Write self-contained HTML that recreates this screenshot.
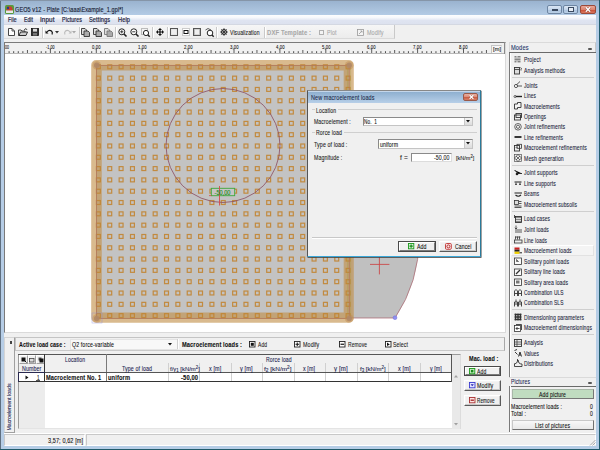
<!DOCTYPE html>
<html><head><meta charset="utf-8">
<style>
*{margin:0;padding:0;box-sizing:border-box}
html,body{width:600px;height:450px;overflow:hidden;background:#b9d1ea}
body{position:relative;font-family:"Liberation Sans",sans-serif;font-size:7px;color:#000}
.a{position:absolute}
.t{position:absolute;white-space:pre;line-height:1;transform-origin:left center;-webkit-text-stroke:0.09px currentColor}
svg{position:absolute;overflow:visible}
</style></head><body>
<div class="a" style="left:0px;top:0px;width:600px;height:450px;background:#bad1ea"></div>
<div class="a" style="left:0px;top:0px;width:1px;height:450px;background:#5f6f80"></div>
<div class="a" style="left:0px;top:0px;width:600px;height:1px;background:#8595a8"></div>
<div class="a" style="left:599px;top:0px;width:1px;height:450px;background:#1f5a6a"></div>
<div class="a" style="left:0px;top:449px;width:600px;height:1px;background:#1f5a6a"></div>
<div class="a" style="left:1px;top:1px;width:598px;height:14px;background:linear-gradient(#9ab3cf,#b3cbe5)"></div>
<div class="a" style="left:1px;top:15px;width:3px;height:434px;background:#b6cde6"></div>
<div class="a" style="left:596px;top:15px;width:3px;height:434px;background:#b6cde6"></div>
<div class="a" style="left:1px;top:446px;width:598px;height:3px;background:#b6cde6"></div>
<svg style="left:5px;top:5px" width="9" height="9" viewBox="0 0 9 9"><rect x="0" y="0" width="9" height="9" rx="1.5" fill="#5a9a3c"/><circle cx="4.5" cy="4.3" r="3" fill="#c84030"/><rect x="1" y="5.5" width="7" height="2.5" fill="#e8e8e8"/><circle cx="3" cy="3" r="1.2" fill="#2a3a8a"/></svg>
<div class="t" style="left:15.00px;top:6.80px;font-size:6.8px;letter-spacing:0.12px;color:#1a2236;transform:scaleX(0.811);-webkit-text-stroke:0.15px #1a2236">GEO5 v12 - Plate [C:\aaa\Example_1.gpl*]</div>
<div class="a" style="left:547px;top:5px;width:15px;height:9px;border:1px solid #6e86a3;border-radius:2px;background:linear-gradient(#dbe7f4 0,#c3d5ea 50%,#a9c1dd 51%,#b9cfe6 100%)"></div>
<div class="a" style="left:551.5px;top:8.8px;width:6px;height:2.2px;background:#e8eef6;border:0.6px solid #3a4a60"></div>
<div class="a" style="left:563px;top:5px;width:15px;height:9px;border:1px solid #6e86a3;border-radius:2px;background:linear-gradient(#dbe7f4 0,#c3d5ea 50%,#a9c1dd 51%,#b9cfe6 100%)"></div>
<div class="a" style="left:567.5px;top:7px;width:6.5px;height:5px;border:0.8px solid #3a4a60;border-top-width:1.6px;background:#e8eef6"></div>
<div class="a" style="left:580px;top:5px;width:16px;height:9px;border:1px solid #9a4a3a;border-radius:2px;background:linear-gradient(#eaa898 0,#dc8470 50%,#c84a30 51%,#d87860 100%)"></div>
<svg style="left:584px;top:6px" width="8" height="7" viewBox="0 0 8 7"><path d="M1.8 1.2 L6.2 5.8 M6.2 1.2 L1.8 5.8" stroke="#5a2a20" stroke-width="2.2" opacity="0.5"/><path d="M1.8 1.2 L6.2 5.8 M6.2 1.2 L1.8 5.8" stroke="#fff" stroke-width="1.3"/></svg>
<div class="a" style="left:4px;top:15px;width:592px;height:10px;background:linear-gradient(#fcfdfe 0,#f6f8fc 25%,#dfe4f1 55%,#dce1ee 100%)"></div>
<div class="a" style="left:4px;top:24px;width:592px;height:1px;background:#d4d8e2"></div>
<div class="t" style="left:8.00px;top:16.70px;font-size:6.8px;letter-spacing:0.12px;color:#1e2440;transform:scaleX(0.751);-webkit-text-stroke:0.2px #1e2440">File</div>
<div class="t" style="left:24.00px;top:16.70px;font-size:6.8px;letter-spacing:0.12px;color:#1e2440;transform:scaleX(0.745);-webkit-text-stroke:0.2px #1e2440">Edit</div>
<div class="t" style="left:40.00px;top:16.70px;font-size:6.8px;letter-spacing:0.12px;color:#1e2440;transform:scaleX(0.929);-webkit-text-stroke:0.2px #1e2440">Input</div>
<div class="t" style="left:62.00px;top:16.70px;font-size:6.8px;letter-spacing:0.12px;color:#1e2440;transform:scaleX(0.787);-webkit-text-stroke:0.2px #1e2440">Pictures</div>
<div class="t" style="left:89.00px;top:16.70px;font-size:6.8px;letter-spacing:0.12px;color:#1e2440;transform:scaleX(0.826);-webkit-text-stroke:0.2px #1e2440">Settings</div>
<div class="t" style="left:118.00px;top:16.70px;font-size:6.8px;letter-spacing:0.12px;color:#1e2440;transform:scaleX(0.837);-webkit-text-stroke:0.2px #1e2440">Help</div>
<div class="a" style="left:4px;top:25px;width:592px;height:421px;background:#f0f0f0"></div>
<div class="a" style="left:4px;top:25px;width:391px;height:14px;background:linear-gradient(#f6f6f6,#ececec);border-bottom:1px solid #dadada;border-right:1px solid #c9c9c9"></div>
<div class="a" style="left:42px;top:27px;width:1px;height:11px;background:#c9c9c9;box-shadow:1px 0 #fff"></div>
<div class="a" style="left:78.5px;top:27px;width:1px;height:11px;background:#c9c9c9;box-shadow:1px 0 #fff"></div>
<div class="a" style="left:115px;top:27px;width:1px;height:11px;background:#c9c9c9;box-shadow:1px 0 #fff"></div>
<div class="a" style="left:152px;top:27px;width:1px;height:11px;background:#c9c9c9;box-shadow:1px 0 #fff"></div>
<div class="a" style="left:166.5px;top:27px;width:1px;height:11px;background:#c9c9c9;box-shadow:1px 0 #fff"></div>
<div class="a" style="left:215.5px;top:27px;width:1px;height:11px;background:#c9c9c9;box-shadow:1px 0 #fff"></div>
<div class="a" style="left:263.5px;top:27px;width:1px;height:11px;background:#c9c9c9;box-shadow:1px 0 #fff"></div>
<svg style="left:8px;top:28px" width="7" height="8" viewBox="0 0 7 8"><path d="M0.5 0.5 H4 L6.5 3 V7.5 H0.5 Z" fill="#fff" stroke="#333" stroke-width="0.9"/><path d="M4 0.5 V3 H6.5" fill="none" stroke="#333" stroke-width="0.8"/></svg>
<svg style="left:18px;top:28px" width="10" height="8" viewBox="0 0 10 8"><path d="M0.5 2 H3 L4 3 H7 V7.5 H0.5 Z" fill="#e8e8e8" stroke="#333" stroke-width="0.9"/><path d="M1 7.5 L2.5 4 H9.5 L8 7.5 Z" fill="#ccc" stroke="#222" stroke-width="0.9"/><path d="M6 2 L8 0.5 L9 2" fill="none" stroke="#222" stroke-width="0.8"/></svg>
<svg style="left:31px;top:28px" width="8" height="8" viewBox="0 0 8 8"><rect x="0.5" y="0.5" width="7" height="7" fill="#333" stroke="#111" stroke-width="0.8"/><rect x="2" y="0.8" width="4" height="2.8" fill="#ddd"/><rect x="2" y="5" width="4" height="2.5" fill="#777"/></svg>
<svg style="left:45px;top:29px" width="9" height="6" viewBox="0 0 9 6"><path d="M2 3 Q4 0.5 6.5 2 Q8 3.5 7 5.5" fill="none" stroke="#111" stroke-width="1.2"/><path d="M0.5 1.5 L3.5 4.5 L0.5 4.5 Z" fill="#111"/></svg>
<svg style="left:55px;top:31px" width="4" height="3" viewBox="0 0 4 3"><path d="M0 0 H4 L2 2.5 Z" fill="#333"/></svg>
<svg style="left:63px;top:29px" width="9" height="6" viewBox="0 0 9 6"><path d="M7 3 Q5 0.5 2.5 2 Q1 3.5 2 5.5" fill="none" stroke="#bbb" stroke-width="1.1"/><path d="M8.5 1.5 L5.5 4.5 L8.5 4.5 Z" fill="#bbb"/></svg>
<svg style="left:72px;top:31px" width="4" height="3" viewBox="0 0 4 3"><path d="M0 0 H4 L2 2.5 Z" fill="#aaa"/></svg>
<svg style="left:81px;top:28px" width="9" height="9" viewBox="0 0 9 9"><path d="M0.5 0.5 H4 L5.5 2 V6.5 H0.5 Z" fill="#ddd" stroke="#333" stroke-width="0.9"/><path d="M3 3 H7 L8.5 4.5 V8.5 H3 Z" fill="#aaa" stroke="#333" stroke-width="0.9"/></svg>
<svg style="left:92.5px;top:28px" width="9" height="9" viewBox="0 0 9 9"><path d="M0.5 0.5 H4 L5.5 2 V6.5 H0.5 Z" fill="#ddd" stroke="#333" stroke-width="0.9"/><path d="M3 3 H7 L8.5 4.5 V8.5 H3 Z" fill="#aaa" stroke="#333" stroke-width="0.9"/></svg>
<svg style="left:104px;top:28px" width="9" height="9" viewBox="0 0 9 9"><path d="M0.5 0.5 H4 L5.5 2 V6.5 H0.5 Z" fill="#ddd" stroke="#777" stroke-width="0.9"/><path d="M3 3 H7 L8.5 4.5 V8.5 H3 Z" fill="#aaa" stroke="#777" stroke-width="0.9"/></svg>
<svg style="left:117.5px;top:28px" width="9" height="9" viewBox="0 0 9 9"><circle cx="3.8" cy="3.8" r="3" fill="#fff" stroke="#222" stroke-width="1"/><path d="M6 6 L8.5 8.5" stroke="#222" stroke-width="1.6"/><path d="M2.2 3.8 H5.4 M3.8 2.2 V5.4" stroke="#222" stroke-width="0.9"/></svg>
<svg style="left:129.5px;top:28px" width="9" height="9" viewBox="0 0 9 9"><circle cx="3.8" cy="3.8" r="3" fill="#fff" stroke="#222" stroke-width="1"/><path d="M6 6 L8.5 8.5" stroke="#222" stroke-width="1.6"/><path d="M2.2 3.8 H5.4" stroke="#222" stroke-width="0.9"/></svg>
<svg style="left:141px;top:28px" width="9" height="9" viewBox="0 0 9 9"><rect x="0.5" y="0.5" width="6" height="6" fill="none" stroke="#555" stroke-width="0.7" stroke-dasharray="1 1"/><circle cx="5" cy="5" r="2.6" fill="#fff" stroke="#222" stroke-width="1"/><path d="M6.8 6.8 L8.7 8.7" stroke="#222" stroke-width="1.5"/></svg>
<svg style="left:155.5px;top:28px" width="8" height="8" viewBox="0 0 8 8"><path d="M4 0 L6 2 H2 Z M4 8 L6 6 H2 Z M0 4 L2 2 V6 Z M8 4 L6 2 V6 Z" fill="#111"/><path d="M4 1.5 V6.5 M1.5 4 H6.5" stroke="#111" stroke-width="1.2"/></svg>
<svg style="left:170px;top:28px" width="8" height="8" viewBox="0 0 8 8"><rect x="0.5" y="0.5" width="7" height="7" fill="#ddd" stroke="#555" stroke-width="1"/><rect x="1.5" y="1.5" width="5" height="5" fill="#eee"/></svg>
<svg style="left:181.5px;top:28px" width="8" height="8" viewBox="0 0 8 8"><rect x="0.5" y="0.5" width="7" height="7" fill="#fff" stroke="#777" stroke-width="0.7" stroke-dasharray="1 1"/><rect x="2" y="2.5" width="4" height="3" fill="#fff" stroke="#111" stroke-width="1"/></svg>
<svg style="left:193px;top:28px" width="8" height="8" viewBox="0 0 8 8"><rect x="0.5" y="0.5" width="7" height="7" fill="#bbb" stroke="#555" stroke-width="1"/><rect x="2" y="1.5" width="4" height="5" fill="#eee"/></svg>
<svg style="left:204.5px;top:28px" width="9" height="9" viewBox="0 0 9 9"><path d="M0.5 2 L3 0.5 L6 2" fill="none" stroke="#333" stroke-width="0.8"/><circle cx="5" cy="5" r="2.8" fill="#fff" stroke="#222" stroke-width="1"/><path d="M7 7 L8.7 8.7" stroke="#222" stroke-width="1.4"/></svg>
<svg style="left:219.5px;top:28px" width="8" height="8" viewBox="0 0 8 8"><circle cx="4" cy="4" r="2.5" fill="none" stroke="#222" stroke-width="1"/><path d="M4 0 V8 M0 4 H8 M1.2 1.2 L6.8 6.8 M6.8 1.2 L1.2 6.8" stroke="#222" stroke-width="0.7"/></svg>
<div class="t" style="left:229.50px;top:30.07px;font-size:6.27px;letter-spacing:0.12px;color:#1a1a1a;transform:scaleX(0.808);">Visualization</div>
<div class="t" style="left:267.00px;top:30.07px;font-size:6.27px;font-weight:bold;letter-spacing:0.12px;color:#a8a8a8;transform:scaleX(0.942);">DXF Template :</div>
<div class="a" style="left:318.5px;top:29.5px;width:5px;height:5px;border:1px solid #b0b0b0;background:#f4f4f4"></div>
<div class="t" style="left:326.50px;top:30.07px;font-size:6.27px;letter-spacing:0.12px;color:#a8a8a8;transform:scaleX(0.851);">Plot</div>
<svg style="left:357px;top:28.5px" width="7" height="7" viewBox="0 0 7 7"><rect x="0.5" y="0.5" width="6" height="6" fill="#f4f4f4" stroke="#999" stroke-width="0.8"/><path d="M2 5 L5 2 M3.5 2 H5 V3.5" stroke="#999" stroke-width="0.8" fill="none"/></svg>
<div class="t" style="left:366.50px;top:30.07px;font-size:6.27px;letter-spacing:0.12px;color:#a8a8a8;transform:scaleX(0.865);">Modify</div>
<div class="a" style="left:4px;top:42px;width:501.5px;height:291px;background:#fff;border:1px solid #7a7a7a;border-right-color:#dadada;border-bottom-color:#dadada"></div>
<div class="a" style="left:5px;top:43px;width:499px;height:10px;background:#f0f0f0"></div>
<div class="a" style="left:5px;top:53px;width:499px;height:1px;background:#b8b8b8"></div>
<div class="a" style="left:504px;top:42px;width:1.2px;height:12px;background:#8a8a8a"></div>
<svg style="left:0;top:0" width="600" height="450" viewBox="0 0 600 450"><path d="M9.09 51.2 V53" stroke="#222" stroke-width="0.8"/><path d="M13.68 51.2 V53" stroke="#222" stroke-width="0.8"/><path d="M18.27 51.2 V53" stroke="#222" stroke-width="0.8"/><path d="M22.86 51.2 V53" stroke="#222" stroke-width="0.8"/><path d="M27.45 50 V53" stroke="#333" stroke-width="0.8"/><path d="M32.04 51.2 V53" stroke="#222" stroke-width="0.8"/><path d="M36.63 51.2 V53" stroke="#222" stroke-width="0.8"/><path d="M41.22 51.2 V53" stroke="#222" stroke-width="0.8"/><path d="M45.81 51.2 V53" stroke="#222" stroke-width="0.8"/><path d="M50.40 48.5 V53" stroke="#333" stroke-width="0.8"/><path d="M54.99 51.2 V53" stroke="#222" stroke-width="0.8"/><path d="M59.58 51.2 V53" stroke="#222" stroke-width="0.8"/><path d="M64.17 51.2 V53" stroke="#222" stroke-width="0.8"/><path d="M68.76 51.2 V53" stroke="#222" stroke-width="0.8"/><path d="M73.35 50 V53" stroke="#333" stroke-width="0.8"/><path d="M77.94 51.2 V53" stroke="#222" stroke-width="0.8"/><path d="M82.53 51.2 V53" stroke="#222" stroke-width="0.8"/><path d="M87.12 51.2 V53" stroke="#222" stroke-width="0.8"/><path d="M91.71 51.2 V53" stroke="#222" stroke-width="0.8"/><path d="M96.30 48.5 V53" stroke="#333" stroke-width="0.8"/><path d="M100.89 51.2 V53" stroke="#222" stroke-width="0.8"/><path d="M105.48 51.2 V53" stroke="#222" stroke-width="0.8"/><path d="M110.07 51.2 V53" stroke="#222" stroke-width="0.8"/><path d="M114.66 51.2 V53" stroke="#222" stroke-width="0.8"/><path d="M119.25 50 V53" stroke="#333" stroke-width="0.8"/><path d="M123.84 51.2 V53" stroke="#222" stroke-width="0.8"/><path d="M128.43 51.2 V53" stroke="#222" stroke-width="0.8"/><path d="M133.02 51.2 V53" stroke="#222" stroke-width="0.8"/><path d="M137.61 51.2 V53" stroke="#222" stroke-width="0.8"/><path d="M142.20 48.5 V53" stroke="#333" stroke-width="0.8"/><path d="M146.79 51.2 V53" stroke="#222" stroke-width="0.8"/><path d="M151.38 51.2 V53" stroke="#222" stroke-width="0.8"/><path d="M155.97 51.2 V53" stroke="#222" stroke-width="0.8"/><path d="M160.56 51.2 V53" stroke="#222" stroke-width="0.8"/><path d="M165.15 50 V53" stroke="#333" stroke-width="0.8"/><path d="M169.74 51.2 V53" stroke="#222" stroke-width="0.8"/><path d="M174.33 51.2 V53" stroke="#222" stroke-width="0.8"/><path d="M178.92 51.2 V53" stroke="#222" stroke-width="0.8"/><path d="M183.51 51.2 V53" stroke="#222" stroke-width="0.8"/><path d="M188.10 48.5 V53" stroke="#333" stroke-width="0.8"/><path d="M192.69 51.2 V53" stroke="#222" stroke-width="0.8"/><path d="M197.28 51.2 V53" stroke="#222" stroke-width="0.8"/><path d="M201.87 51.2 V53" stroke="#222" stroke-width="0.8"/><path d="M206.46 51.2 V53" stroke="#222" stroke-width="0.8"/><path d="M211.05 50 V53" stroke="#333" stroke-width="0.8"/><path d="M215.64 51.2 V53" stroke="#222" stroke-width="0.8"/><path d="M220.23 51.2 V53" stroke="#222" stroke-width="0.8"/><path d="M224.82 51.2 V53" stroke="#222" stroke-width="0.8"/><path d="M229.41 51.2 V53" stroke="#222" stroke-width="0.8"/><path d="M234.00 48.5 V53" stroke="#333" stroke-width="0.8"/><path d="M238.59 51.2 V53" stroke="#222" stroke-width="0.8"/><path d="M243.18 51.2 V53" stroke="#222" stroke-width="0.8"/><path d="M247.77 51.2 V53" stroke="#222" stroke-width="0.8"/><path d="M252.36 51.2 V53" stroke="#222" stroke-width="0.8"/><path d="M256.95 50 V53" stroke="#333" stroke-width="0.8"/><path d="M261.54 51.2 V53" stroke="#222" stroke-width="0.8"/><path d="M266.13 51.2 V53" stroke="#222" stroke-width="0.8"/><path d="M270.72 51.2 V53" stroke="#222" stroke-width="0.8"/><path d="M275.31 51.2 V53" stroke="#222" stroke-width="0.8"/><path d="M279.90 48.5 V53" stroke="#333" stroke-width="0.8"/><path d="M284.49 51.2 V53" stroke="#222" stroke-width="0.8"/><path d="M289.08 51.2 V53" stroke="#222" stroke-width="0.8"/><path d="M293.67 51.2 V53" stroke="#222" stroke-width="0.8"/><path d="M298.26 51.2 V53" stroke="#222" stroke-width="0.8"/><path d="M302.85 50 V53" stroke="#333" stroke-width="0.8"/><path d="M307.44 51.2 V53" stroke="#222" stroke-width="0.8"/><path d="M312.03 51.2 V53" stroke="#222" stroke-width="0.8"/><path d="M316.62 51.2 V53" stroke="#222" stroke-width="0.8"/><path d="M321.21 51.2 V53" stroke="#222" stroke-width="0.8"/><path d="M325.80 48.5 V53" stroke="#333" stroke-width="0.8"/><path d="M330.39 51.2 V53" stroke="#222" stroke-width="0.8"/><path d="M334.98 51.2 V53" stroke="#222" stroke-width="0.8"/><path d="M339.57 51.2 V53" stroke="#222" stroke-width="0.8"/><path d="M344.16 51.2 V53" stroke="#222" stroke-width="0.8"/><path d="M348.75 50 V53" stroke="#333" stroke-width="0.8"/><path d="M353.34 51.2 V53" stroke="#222" stroke-width="0.8"/><path d="M357.93 51.2 V53" stroke="#222" stroke-width="0.8"/><path d="M362.52 51.2 V53" stroke="#222" stroke-width="0.8"/><path d="M367.11 51.2 V53" stroke="#222" stroke-width="0.8"/><path d="M371.70 48.5 V53" stroke="#333" stroke-width="0.8"/><path d="M376.29 51.2 V53" stroke="#222" stroke-width="0.8"/><path d="M380.88 51.2 V53" stroke="#222" stroke-width="0.8"/><path d="M385.47 51.2 V53" stroke="#222" stroke-width="0.8"/><path d="M390.06 51.2 V53" stroke="#222" stroke-width="0.8"/><path d="M394.65 50 V53" stroke="#333" stroke-width="0.8"/><path d="M399.24 51.2 V53" stroke="#222" stroke-width="0.8"/><path d="M403.83 51.2 V53" stroke="#222" stroke-width="0.8"/><path d="M408.42 51.2 V53" stroke="#222" stroke-width="0.8"/><path d="M413.01 51.2 V53" stroke="#222" stroke-width="0.8"/><path d="M417.60 48.5 V53" stroke="#333" stroke-width="0.8"/><path d="M422.19 51.2 V53" stroke="#222" stroke-width="0.8"/><path d="M426.78 51.2 V53" stroke="#222" stroke-width="0.8"/><path d="M431.37 51.2 V53" stroke="#222" stroke-width="0.8"/><path d="M435.96 51.2 V53" stroke="#222" stroke-width="0.8"/><path d="M440.55 50 V53" stroke="#333" stroke-width="0.8"/><path d="M445.14 51.2 V53" stroke="#222" stroke-width="0.8"/><path d="M449.73 51.2 V53" stroke="#222" stroke-width="0.8"/><path d="M454.32 51.2 V53" stroke="#222" stroke-width="0.8"/><path d="M458.91 51.2 V53" stroke="#222" stroke-width="0.8"/><path d="M463.50 48.5 V53" stroke="#333" stroke-width="0.8"/><path d="M468.09 51.2 V53" stroke="#222" stroke-width="0.8"/><path d="M472.68 51.2 V53" stroke="#222" stroke-width="0.8"/><path d="M477.27 51.2 V53" stroke="#222" stroke-width="0.8"/><path d="M481.86 51.2 V53" stroke="#222" stroke-width="0.8"/><path d="M486.45 50 V53" stroke="#333" stroke-width="0.8"/></svg>
<div class="t" style="left:46.10px;top:44.75px;font-size:5.5px;letter-spacing:0.12px;color:#111;transform:scaleX(0.661);">-1,00</div>
<div class="t" style="left:92.00px;top:44.75px;font-size:5.5px;letter-spacing:0.12px;color:#111;transform:scaleX(0.777);">0,00</div>
<div class="t" style="left:137.90px;top:44.75px;font-size:5.5px;letter-spacing:0.12px;color:#111;transform:scaleX(0.777);">1,00</div>
<div class="t" style="left:183.80px;top:44.75px;font-size:5.5px;letter-spacing:0.12px;color:#111;transform:scaleX(0.777);">2,00</div>
<div class="t" style="left:229.70px;top:44.75px;font-size:5.5px;letter-spacing:0.12px;color:#111;transform:scaleX(0.777);">3,00</div>
<div class="t" style="left:275.60px;top:44.75px;font-size:5.5px;letter-spacing:0.12px;color:#111;transform:scaleX(0.777);">4,00</div>
<div class="t" style="left:321.50px;top:44.75px;font-size:5.5px;letter-spacing:0.12px;color:#111;transform:scaleX(0.777);">5,00</div>
<div class="t" style="left:367.40px;top:44.75px;font-size:5.5px;letter-spacing:0.12px;color:#111;transform:scaleX(0.777);">6,00</div>
<div class="t" style="left:413.30px;top:44.75px;font-size:5.5px;letter-spacing:0.12px;color:#111;transform:scaleX(0.777);">7,00</div>
<div class="t" style="left:459.20px;top:44.75px;font-size:5.5px;letter-spacing:0.12px;color:#111;transform:scaleX(0.777);">8,00</div>
<div class="t" style="left:4.50px;top:44.75px;font-size:5.5px;letter-spacing:0.12px;color:#111;transform:scaleX(0.641);">00</div>
<div class="a" style="left:491px;top:45px;width:11px;height:8px;border:1px solid #c4c4c4;border-bottom:none;border-right-color:#e0e0e0;background:#f6f6f6"></div>
<div class="t" style="left:492.50px;top:46.95px;font-size:5.5px;letter-spacing:0.12px;color:#111;transform:scaleX(1.016);">[m]</div>
<svg style="left:5px;top:54px" width="499" height="278" viewBox="5 54 499 278"><path d="M349 318 H395 A142 142 0 0 0 419 238 V150 H349 Z" fill="#c0c0c0" stroke="#a8606a" stroke-width="0.7"/><rect x="96.5" y="65.3" width="252.7" height="253.2" fill="#c3c3c3"/><path fill-rule="evenodd" fill="rgba(194,144,72,0.62)" d="M96.2 60 H348.8 A5 5 0 0 1 353.8 65 V317.7 A5 5 0 0 1 348.8 322.7 H96.2 A5 5 0 0 1 91.2 317.7 V65 A5 5 0 0 1 96.2 60 Z M101.8 70.4 V312.4 H343.7 V70.4 Z"/><g fill="none" stroke="#c28634" stroke-width="1.2" opacity="0.92"><rect x="96.45" y="64.85" width="3.9" height="3.9"/><rect x="96.45" y="76.16" width="3.9" height="3.9"/><rect x="96.45" y="87.47" width="3.9" height="3.9"/><rect x="96.45" y="98.78" width="3.9" height="3.9"/><rect x="96.45" y="110.09" width="3.9" height="3.9"/><rect x="96.45" y="121.40" width="3.9" height="3.9"/><rect x="96.45" y="132.71" width="3.9" height="3.9"/><rect x="96.45" y="144.02" width="3.9" height="3.9"/><rect x="96.45" y="155.33" width="3.9" height="3.9"/><rect x="96.45" y="166.64" width="3.9" height="3.9"/><rect x="96.45" y="177.95" width="3.9" height="3.9"/><rect x="96.45" y="189.26" width="3.9" height="3.9"/><rect x="96.45" y="200.57" width="3.9" height="3.9"/><rect x="96.45" y="211.88" width="3.9" height="3.9"/><rect x="96.45" y="223.19" width="3.9" height="3.9"/><rect x="96.45" y="234.50" width="3.9" height="3.9"/><rect x="96.45" y="245.81" width="3.9" height="3.9"/><rect x="96.45" y="257.12" width="3.9" height="3.9"/><rect x="96.45" y="268.43" width="3.9" height="3.9"/><rect x="96.45" y="279.74" width="3.9" height="3.9"/><rect x="96.45" y="291.05" width="3.9" height="3.9"/><rect x="96.45" y="302.36" width="3.9" height="3.9"/><rect x="96.45" y="313.67" width="3.9" height="3.9"/><rect x="107.80" y="64.85" width="3.9" height="3.9"/><rect x="107.80" y="76.16" width="3.9" height="3.9"/><rect x="107.80" y="87.47" width="3.9" height="3.9"/><rect x="107.80" y="98.78" width="3.9" height="3.9"/><rect x="107.80" y="110.09" width="3.9" height="3.9"/><rect x="107.80" y="121.40" width="3.9" height="3.9"/><rect x="107.80" y="132.71" width="3.9" height="3.9"/><rect x="107.80" y="144.02" width="3.9" height="3.9"/><rect x="107.80" y="155.33" width="3.9" height="3.9"/><rect x="107.80" y="166.64" width="3.9" height="3.9"/><rect x="107.80" y="177.95" width="3.9" height="3.9"/><rect x="107.80" y="189.26" width="3.9" height="3.9"/><rect x="107.80" y="200.57" width="3.9" height="3.9"/><rect x="107.80" y="211.88" width="3.9" height="3.9"/><rect x="107.80" y="223.19" width="3.9" height="3.9"/><rect x="107.80" y="234.50" width="3.9" height="3.9"/><rect x="107.80" y="245.81" width="3.9" height="3.9"/><rect x="107.80" y="257.12" width="3.9" height="3.9"/><rect x="107.80" y="268.43" width="3.9" height="3.9"/><rect x="107.80" y="279.74" width="3.9" height="3.9"/><rect x="107.80" y="291.05" width="3.9" height="3.9"/><rect x="107.80" y="302.36" width="3.9" height="3.9"/><rect x="107.80" y="313.67" width="3.9" height="3.9"/><rect x="119.15" y="64.85" width="3.9" height="3.9"/><rect x="119.15" y="76.16" width="3.9" height="3.9"/><rect x="119.15" y="87.47" width="3.9" height="3.9"/><rect x="119.15" y="98.78" width="3.9" height="3.9"/><rect x="119.15" y="110.09" width="3.9" height="3.9"/><rect x="119.15" y="121.40" width="3.9" height="3.9"/><rect x="119.15" y="132.71" width="3.9" height="3.9"/><rect x="119.15" y="144.02" width="3.9" height="3.9"/><rect x="119.15" y="155.33" width="3.9" height="3.9"/><rect x="119.15" y="166.64" width="3.9" height="3.9"/><rect x="119.15" y="177.95" width="3.9" height="3.9"/><rect x="119.15" y="189.26" width="3.9" height="3.9"/><rect x="119.15" y="200.57" width="3.9" height="3.9"/><rect x="119.15" y="211.88" width="3.9" height="3.9"/><rect x="119.15" y="223.19" width="3.9" height="3.9"/><rect x="119.15" y="234.50" width="3.9" height="3.9"/><rect x="119.15" y="245.81" width="3.9" height="3.9"/><rect x="119.15" y="257.12" width="3.9" height="3.9"/><rect x="119.15" y="268.43" width="3.9" height="3.9"/><rect x="119.15" y="279.74" width="3.9" height="3.9"/><rect x="119.15" y="291.05" width="3.9" height="3.9"/><rect x="119.15" y="302.36" width="3.9" height="3.9"/><rect x="119.15" y="313.67" width="3.9" height="3.9"/><rect x="130.50" y="64.85" width="3.9" height="3.9"/><rect x="130.50" y="76.16" width="3.9" height="3.9"/><rect x="130.50" y="87.47" width="3.9" height="3.9"/><rect x="130.50" y="98.78" width="3.9" height="3.9"/><rect x="130.50" y="110.09" width="3.9" height="3.9"/><rect x="130.50" y="121.40" width="3.9" height="3.9"/><rect x="130.50" y="132.71" width="3.9" height="3.9"/><rect x="130.50" y="144.02" width="3.9" height="3.9"/><rect x="130.50" y="155.33" width="3.9" height="3.9"/><rect x="130.50" y="166.64" width="3.9" height="3.9"/><rect x="130.50" y="177.95" width="3.9" height="3.9"/><rect x="130.50" y="189.26" width="3.9" height="3.9"/><rect x="130.50" y="200.57" width="3.9" height="3.9"/><rect x="130.50" y="211.88" width="3.9" height="3.9"/><rect x="130.50" y="223.19" width="3.9" height="3.9"/><rect x="130.50" y="234.50" width="3.9" height="3.9"/><rect x="130.50" y="245.81" width="3.9" height="3.9"/><rect x="130.50" y="257.12" width="3.9" height="3.9"/><rect x="130.50" y="268.43" width="3.9" height="3.9"/><rect x="130.50" y="279.74" width="3.9" height="3.9"/><rect x="130.50" y="291.05" width="3.9" height="3.9"/><rect x="130.50" y="302.36" width="3.9" height="3.9"/><rect x="130.50" y="313.67" width="3.9" height="3.9"/><rect x="141.85" y="64.85" width="3.9" height="3.9"/><rect x="141.85" y="76.16" width="3.9" height="3.9"/><rect x="141.85" y="87.47" width="3.9" height="3.9"/><rect x="141.85" y="98.78" width="3.9" height="3.9"/><rect x="141.85" y="110.09" width="3.9" height="3.9"/><rect x="141.85" y="121.40" width="3.9" height="3.9"/><rect x="141.85" y="132.71" width="3.9" height="3.9"/><rect x="141.85" y="144.02" width="3.9" height="3.9"/><rect x="141.85" y="155.33" width="3.9" height="3.9"/><rect x="141.85" y="166.64" width="3.9" height="3.9"/><rect x="141.85" y="177.95" width="3.9" height="3.9"/><rect x="141.85" y="189.26" width="3.9" height="3.9"/><rect x="141.85" y="200.57" width="3.9" height="3.9"/><rect x="141.85" y="211.88" width="3.9" height="3.9"/><rect x="141.85" y="223.19" width="3.9" height="3.9"/><rect x="141.85" y="234.50" width="3.9" height="3.9"/><rect x="141.85" y="245.81" width="3.9" height="3.9"/><rect x="141.85" y="257.12" width="3.9" height="3.9"/><rect x="141.85" y="268.43" width="3.9" height="3.9"/><rect x="141.85" y="279.74" width="3.9" height="3.9"/><rect x="141.85" y="291.05" width="3.9" height="3.9"/><rect x="141.85" y="302.36" width="3.9" height="3.9"/><rect x="141.85" y="313.67" width="3.9" height="3.9"/><rect x="153.20" y="64.85" width="3.9" height="3.9"/><rect x="153.20" y="76.16" width="3.9" height="3.9"/><rect x="153.20" y="87.47" width="3.9" height="3.9"/><rect x="153.20" y="98.78" width="3.9" height="3.9"/><rect x="153.20" y="110.09" width="3.9" height="3.9"/><rect x="153.20" y="121.40" width="3.9" height="3.9"/><rect x="153.20" y="132.71" width="3.9" height="3.9"/><rect x="153.20" y="144.02" width="3.9" height="3.9"/><rect x="153.20" y="155.33" width="3.9" height="3.9"/><rect x="153.20" y="166.64" width="3.9" height="3.9"/><rect x="153.20" y="177.95" width="3.9" height="3.9"/><rect x="153.20" y="189.26" width="3.9" height="3.9"/><rect x="153.20" y="200.57" width="3.9" height="3.9"/><rect x="153.20" y="211.88" width="3.9" height="3.9"/><rect x="153.20" y="223.19" width="3.9" height="3.9"/><rect x="153.20" y="234.50" width="3.9" height="3.9"/><rect x="153.20" y="245.81" width="3.9" height="3.9"/><rect x="153.20" y="257.12" width="3.9" height="3.9"/><rect x="153.20" y="268.43" width="3.9" height="3.9"/><rect x="153.20" y="279.74" width="3.9" height="3.9"/><rect x="153.20" y="291.05" width="3.9" height="3.9"/><rect x="153.20" y="302.36" width="3.9" height="3.9"/><rect x="153.20" y="313.67" width="3.9" height="3.9"/><rect x="164.55" y="64.85" width="3.9" height="3.9"/><rect x="164.55" y="76.16" width="3.9" height="3.9"/><rect x="164.55" y="87.47" width="3.9" height="3.9"/><rect x="164.55" y="98.78" width="3.9" height="3.9"/><rect x="164.55" y="110.09" width="3.9" height="3.9"/><rect x="164.55" y="121.40" width="3.9" height="3.9"/><rect x="164.55" y="132.71" width="3.9" height="3.9"/><rect x="164.55" y="144.02" width="3.9" height="3.9"/><rect x="164.55" y="155.33" width="3.9" height="3.9"/><rect x="164.55" y="166.64" width="3.9" height="3.9"/><rect x="164.55" y="177.95" width="3.9" height="3.9"/><rect x="164.55" y="189.26" width="3.9" height="3.9"/><rect x="164.55" y="200.57" width="3.9" height="3.9"/><rect x="164.55" y="211.88" width="3.9" height="3.9"/><rect x="164.55" y="223.19" width="3.9" height="3.9"/><rect x="164.55" y="234.50" width="3.9" height="3.9"/><rect x="164.55" y="245.81" width="3.9" height="3.9"/><rect x="164.55" y="257.12" width="3.9" height="3.9"/><rect x="164.55" y="268.43" width="3.9" height="3.9"/><rect x="164.55" y="279.74" width="3.9" height="3.9"/><rect x="164.55" y="291.05" width="3.9" height="3.9"/><rect x="164.55" y="302.36" width="3.9" height="3.9"/><rect x="164.55" y="313.67" width="3.9" height="3.9"/><rect x="175.90" y="64.85" width="3.9" height="3.9"/><rect x="175.90" y="76.16" width="3.9" height="3.9"/><rect x="175.90" y="87.47" width="3.9" height="3.9"/><rect x="175.90" y="98.78" width="3.9" height="3.9"/><rect x="175.90" y="110.09" width="3.9" height="3.9"/><rect x="175.90" y="121.40" width="3.9" height="3.9"/><rect x="175.90" y="132.71" width="3.9" height="3.9"/><rect x="175.90" y="144.02" width="3.9" height="3.9"/><rect x="175.90" y="155.33" width="3.9" height="3.9"/><rect x="175.90" y="166.64" width="3.9" height="3.9"/><rect x="175.90" y="177.95" width="3.9" height="3.9"/><rect x="175.90" y="189.26" width="3.9" height="3.9"/><rect x="175.90" y="200.57" width="3.9" height="3.9"/><rect x="175.90" y="211.88" width="3.9" height="3.9"/><rect x="175.90" y="223.19" width="3.9" height="3.9"/><rect x="175.90" y="234.50" width="3.9" height="3.9"/><rect x="175.90" y="245.81" width="3.9" height="3.9"/><rect x="175.90" y="257.12" width="3.9" height="3.9"/><rect x="175.90" y="268.43" width="3.9" height="3.9"/><rect x="175.90" y="279.74" width="3.9" height="3.9"/><rect x="175.90" y="291.05" width="3.9" height="3.9"/><rect x="175.90" y="302.36" width="3.9" height="3.9"/><rect x="175.90" y="313.67" width="3.9" height="3.9"/><rect x="187.25" y="64.85" width="3.9" height="3.9"/><rect x="187.25" y="76.16" width="3.9" height="3.9"/><rect x="187.25" y="87.47" width="3.9" height="3.9"/><rect x="187.25" y="98.78" width="3.9" height="3.9"/><rect x="187.25" y="110.09" width="3.9" height="3.9"/><rect x="187.25" y="121.40" width="3.9" height="3.9"/><rect x="187.25" y="132.71" width="3.9" height="3.9"/><rect x="187.25" y="144.02" width="3.9" height="3.9"/><rect x="187.25" y="155.33" width="3.9" height="3.9"/><rect x="187.25" y="166.64" width="3.9" height="3.9"/><rect x="187.25" y="177.95" width="3.9" height="3.9"/><rect x="187.25" y="189.26" width="3.9" height="3.9"/><rect x="187.25" y="200.57" width="3.9" height="3.9"/><rect x="187.25" y="211.88" width="3.9" height="3.9"/><rect x="187.25" y="223.19" width="3.9" height="3.9"/><rect x="187.25" y="234.50" width="3.9" height="3.9"/><rect x="187.25" y="245.81" width="3.9" height="3.9"/><rect x="187.25" y="257.12" width="3.9" height="3.9"/><rect x="187.25" y="268.43" width="3.9" height="3.9"/><rect x="187.25" y="279.74" width="3.9" height="3.9"/><rect x="187.25" y="291.05" width="3.9" height="3.9"/><rect x="187.25" y="302.36" width="3.9" height="3.9"/><rect x="187.25" y="313.67" width="3.9" height="3.9"/><rect x="198.60" y="64.85" width="3.9" height="3.9"/><rect x="198.60" y="76.16" width="3.9" height="3.9"/><rect x="198.60" y="87.47" width="3.9" height="3.9"/><rect x="198.60" y="98.78" width="3.9" height="3.9"/><rect x="198.60" y="110.09" width="3.9" height="3.9"/><rect x="198.60" y="121.40" width="3.9" height="3.9"/><rect x="198.60" y="132.71" width="3.9" height="3.9"/><rect x="198.60" y="144.02" width="3.9" height="3.9"/><rect x="198.60" y="155.33" width="3.9" height="3.9"/><rect x="198.60" y="166.64" width="3.9" height="3.9"/><rect x="198.60" y="177.95" width="3.9" height="3.9"/><rect x="198.60" y="189.26" width="3.9" height="3.9"/><rect x="198.60" y="200.57" width="3.9" height="3.9"/><rect x="198.60" y="211.88" width="3.9" height="3.9"/><rect x="198.60" y="223.19" width="3.9" height="3.9"/><rect x="198.60" y="234.50" width="3.9" height="3.9"/><rect x="198.60" y="245.81" width="3.9" height="3.9"/><rect x="198.60" y="257.12" width="3.9" height="3.9"/><rect x="198.60" y="268.43" width="3.9" height="3.9"/><rect x="198.60" y="279.74" width="3.9" height="3.9"/><rect x="198.60" y="291.05" width="3.9" height="3.9"/><rect x="198.60" y="302.36" width="3.9" height="3.9"/><rect x="198.60" y="313.67" width="3.9" height="3.9"/><rect x="209.95" y="64.85" width="3.9" height="3.9"/><rect x="209.95" y="76.16" width="3.9" height="3.9"/><rect x="209.95" y="87.47" width="3.9" height="3.9"/><rect x="209.95" y="98.78" width="3.9" height="3.9"/><rect x="209.95" y="110.09" width="3.9" height="3.9"/><rect x="209.95" y="121.40" width="3.9" height="3.9"/><rect x="209.95" y="132.71" width="3.9" height="3.9"/><rect x="209.95" y="144.02" width="3.9" height="3.9"/><rect x="209.95" y="155.33" width="3.9" height="3.9"/><rect x="209.95" y="166.64" width="3.9" height="3.9"/><rect x="209.95" y="177.95" width="3.9" height="3.9"/><rect x="209.95" y="189.26" width="3.9" height="3.9"/><rect x="209.95" y="200.57" width="3.9" height="3.9"/><rect x="209.95" y="211.88" width="3.9" height="3.9"/><rect x="209.95" y="223.19" width="3.9" height="3.9"/><rect x="209.95" y="234.50" width="3.9" height="3.9"/><rect x="209.95" y="245.81" width="3.9" height="3.9"/><rect x="209.95" y="257.12" width="3.9" height="3.9"/><rect x="209.95" y="268.43" width="3.9" height="3.9"/><rect x="209.95" y="279.74" width="3.9" height="3.9"/><rect x="209.95" y="291.05" width="3.9" height="3.9"/><rect x="209.95" y="302.36" width="3.9" height="3.9"/><rect x="209.95" y="313.67" width="3.9" height="3.9"/><rect x="221.30" y="64.85" width="3.9" height="3.9"/><rect x="221.30" y="76.16" width="3.9" height="3.9"/><rect x="221.30" y="87.47" width="3.9" height="3.9"/><rect x="221.30" y="98.78" width="3.9" height="3.9"/><rect x="221.30" y="110.09" width="3.9" height="3.9"/><rect x="221.30" y="121.40" width="3.9" height="3.9"/><rect x="221.30" y="132.71" width="3.9" height="3.9"/><rect x="221.30" y="144.02" width="3.9" height="3.9"/><rect x="221.30" y="155.33" width="3.9" height="3.9"/><rect x="221.30" y="166.64" width="3.9" height="3.9"/><rect x="221.30" y="177.95" width="3.9" height="3.9"/><rect x="221.30" y="189.26" width="3.9" height="3.9"/><rect x="221.30" y="200.57" width="3.9" height="3.9"/><rect x="221.30" y="211.88" width="3.9" height="3.9"/><rect x="221.30" y="223.19" width="3.9" height="3.9"/><rect x="221.30" y="234.50" width="3.9" height="3.9"/><rect x="221.30" y="245.81" width="3.9" height="3.9"/><rect x="221.30" y="257.12" width="3.9" height="3.9"/><rect x="221.30" y="268.43" width="3.9" height="3.9"/><rect x="221.30" y="279.74" width="3.9" height="3.9"/><rect x="221.30" y="291.05" width="3.9" height="3.9"/><rect x="221.30" y="302.36" width="3.9" height="3.9"/><rect x="221.30" y="313.67" width="3.9" height="3.9"/><rect x="232.65" y="64.85" width="3.9" height="3.9"/><rect x="232.65" y="76.16" width="3.9" height="3.9"/><rect x="232.65" y="87.47" width="3.9" height="3.9"/><rect x="232.65" y="98.78" width="3.9" height="3.9"/><rect x="232.65" y="110.09" width="3.9" height="3.9"/><rect x="232.65" y="121.40" width="3.9" height="3.9"/><rect x="232.65" y="132.71" width="3.9" height="3.9"/><rect x="232.65" y="144.02" width="3.9" height="3.9"/><rect x="232.65" y="155.33" width="3.9" height="3.9"/><rect x="232.65" y="166.64" width="3.9" height="3.9"/><rect x="232.65" y="177.95" width="3.9" height="3.9"/><rect x="232.65" y="189.26" width="3.9" height="3.9"/><rect x="232.65" y="200.57" width="3.9" height="3.9"/><rect x="232.65" y="211.88" width="3.9" height="3.9"/><rect x="232.65" y="223.19" width="3.9" height="3.9"/><rect x="232.65" y="234.50" width="3.9" height="3.9"/><rect x="232.65" y="245.81" width="3.9" height="3.9"/><rect x="232.65" y="257.12" width="3.9" height="3.9"/><rect x="232.65" y="268.43" width="3.9" height="3.9"/><rect x="232.65" y="279.74" width="3.9" height="3.9"/><rect x="232.65" y="291.05" width="3.9" height="3.9"/><rect x="232.65" y="302.36" width="3.9" height="3.9"/><rect x="232.65" y="313.67" width="3.9" height="3.9"/><rect x="244.00" y="64.85" width="3.9" height="3.9"/><rect x="244.00" y="76.16" width="3.9" height="3.9"/><rect x="244.00" y="87.47" width="3.9" height="3.9"/><rect x="244.00" y="98.78" width="3.9" height="3.9"/><rect x="244.00" y="110.09" width="3.9" height="3.9"/><rect x="244.00" y="121.40" width="3.9" height="3.9"/><rect x="244.00" y="132.71" width="3.9" height="3.9"/><rect x="244.00" y="144.02" width="3.9" height="3.9"/><rect x="244.00" y="155.33" width="3.9" height="3.9"/><rect x="244.00" y="166.64" width="3.9" height="3.9"/><rect x="244.00" y="177.95" width="3.9" height="3.9"/><rect x="244.00" y="189.26" width="3.9" height="3.9"/><rect x="244.00" y="200.57" width="3.9" height="3.9"/><rect x="244.00" y="211.88" width="3.9" height="3.9"/><rect x="244.00" y="223.19" width="3.9" height="3.9"/><rect x="244.00" y="234.50" width="3.9" height="3.9"/><rect x="244.00" y="245.81" width="3.9" height="3.9"/><rect x="244.00" y="257.12" width="3.9" height="3.9"/><rect x="244.00" y="268.43" width="3.9" height="3.9"/><rect x="244.00" y="279.74" width="3.9" height="3.9"/><rect x="244.00" y="291.05" width="3.9" height="3.9"/><rect x="244.00" y="302.36" width="3.9" height="3.9"/><rect x="244.00" y="313.67" width="3.9" height="3.9"/><rect x="255.35" y="64.85" width="3.9" height="3.9"/><rect x="255.35" y="76.16" width="3.9" height="3.9"/><rect x="255.35" y="87.47" width="3.9" height="3.9"/><rect x="255.35" y="98.78" width="3.9" height="3.9"/><rect x="255.35" y="110.09" width="3.9" height="3.9"/><rect x="255.35" y="121.40" width="3.9" height="3.9"/><rect x="255.35" y="132.71" width="3.9" height="3.9"/><rect x="255.35" y="144.02" width="3.9" height="3.9"/><rect x="255.35" y="155.33" width="3.9" height="3.9"/><rect x="255.35" y="166.64" width="3.9" height="3.9"/><rect x="255.35" y="177.95" width="3.9" height="3.9"/><rect x="255.35" y="189.26" width="3.9" height="3.9"/><rect x="255.35" y="200.57" width="3.9" height="3.9"/><rect x="255.35" y="211.88" width="3.9" height="3.9"/><rect x="255.35" y="223.19" width="3.9" height="3.9"/><rect x="255.35" y="234.50" width="3.9" height="3.9"/><rect x="255.35" y="245.81" width="3.9" height="3.9"/><rect x="255.35" y="257.12" width="3.9" height="3.9"/><rect x="255.35" y="268.43" width="3.9" height="3.9"/><rect x="255.35" y="279.74" width="3.9" height="3.9"/><rect x="255.35" y="291.05" width="3.9" height="3.9"/><rect x="255.35" y="302.36" width="3.9" height="3.9"/><rect x="255.35" y="313.67" width="3.9" height="3.9"/><rect x="266.70" y="64.85" width="3.9" height="3.9"/><rect x="266.70" y="76.16" width="3.9" height="3.9"/><rect x="266.70" y="87.47" width="3.9" height="3.9"/><rect x="266.70" y="98.78" width="3.9" height="3.9"/><rect x="266.70" y="110.09" width="3.9" height="3.9"/><rect x="266.70" y="121.40" width="3.9" height="3.9"/><rect x="266.70" y="132.71" width="3.9" height="3.9"/><rect x="266.70" y="144.02" width="3.9" height="3.9"/><rect x="266.70" y="155.33" width="3.9" height="3.9"/><rect x="266.70" y="166.64" width="3.9" height="3.9"/><rect x="266.70" y="177.95" width="3.9" height="3.9"/><rect x="266.70" y="189.26" width="3.9" height="3.9"/><rect x="266.70" y="200.57" width="3.9" height="3.9"/><rect x="266.70" y="211.88" width="3.9" height="3.9"/><rect x="266.70" y="223.19" width="3.9" height="3.9"/><rect x="266.70" y="234.50" width="3.9" height="3.9"/><rect x="266.70" y="245.81" width="3.9" height="3.9"/><rect x="266.70" y="257.12" width="3.9" height="3.9"/><rect x="266.70" y="268.43" width="3.9" height="3.9"/><rect x="266.70" y="279.74" width="3.9" height="3.9"/><rect x="266.70" y="291.05" width="3.9" height="3.9"/><rect x="266.70" y="302.36" width="3.9" height="3.9"/><rect x="266.70" y="313.67" width="3.9" height="3.9"/><rect x="278.05" y="64.85" width="3.9" height="3.9"/><rect x="278.05" y="76.16" width="3.9" height="3.9"/><rect x="278.05" y="87.47" width="3.9" height="3.9"/><rect x="278.05" y="98.78" width="3.9" height="3.9"/><rect x="278.05" y="110.09" width="3.9" height="3.9"/><rect x="278.05" y="121.40" width="3.9" height="3.9"/><rect x="278.05" y="132.71" width="3.9" height="3.9"/><rect x="278.05" y="144.02" width="3.9" height="3.9"/><rect x="278.05" y="155.33" width="3.9" height="3.9"/><rect x="278.05" y="166.64" width="3.9" height="3.9"/><rect x="278.05" y="177.95" width="3.9" height="3.9"/><rect x="278.05" y="189.26" width="3.9" height="3.9"/><rect x="278.05" y="200.57" width="3.9" height="3.9"/><rect x="278.05" y="211.88" width="3.9" height="3.9"/><rect x="278.05" y="223.19" width="3.9" height="3.9"/><rect x="278.05" y="234.50" width="3.9" height="3.9"/><rect x="278.05" y="245.81" width="3.9" height="3.9"/><rect x="278.05" y="257.12" width="3.9" height="3.9"/><rect x="278.05" y="268.43" width="3.9" height="3.9"/><rect x="278.05" y="279.74" width="3.9" height="3.9"/><rect x="278.05" y="291.05" width="3.9" height="3.9"/><rect x="278.05" y="302.36" width="3.9" height="3.9"/><rect x="278.05" y="313.67" width="3.9" height="3.9"/><rect x="289.40" y="64.85" width="3.9" height="3.9"/><rect x="289.40" y="76.16" width="3.9" height="3.9"/><rect x="289.40" y="87.47" width="3.9" height="3.9"/><rect x="289.40" y="98.78" width="3.9" height="3.9"/><rect x="289.40" y="110.09" width="3.9" height="3.9"/><rect x="289.40" y="121.40" width="3.9" height="3.9"/><rect x="289.40" y="132.71" width="3.9" height="3.9"/><rect x="289.40" y="144.02" width="3.9" height="3.9"/><rect x="289.40" y="155.33" width="3.9" height="3.9"/><rect x="289.40" y="166.64" width="3.9" height="3.9"/><rect x="289.40" y="177.95" width="3.9" height="3.9"/><rect x="289.40" y="189.26" width="3.9" height="3.9"/><rect x="289.40" y="200.57" width="3.9" height="3.9"/><rect x="289.40" y="211.88" width="3.9" height="3.9"/><rect x="289.40" y="223.19" width="3.9" height="3.9"/><rect x="289.40" y="234.50" width="3.9" height="3.9"/><rect x="289.40" y="245.81" width="3.9" height="3.9"/><rect x="289.40" y="257.12" width="3.9" height="3.9"/><rect x="289.40" y="268.43" width="3.9" height="3.9"/><rect x="289.40" y="279.74" width="3.9" height="3.9"/><rect x="289.40" y="291.05" width="3.9" height="3.9"/><rect x="289.40" y="302.36" width="3.9" height="3.9"/><rect x="289.40" y="313.67" width="3.9" height="3.9"/><rect x="300.75" y="64.85" width="3.9" height="3.9"/><rect x="300.75" y="76.16" width="3.9" height="3.9"/><rect x="300.75" y="87.47" width="3.9" height="3.9"/><rect x="300.75" y="98.78" width="3.9" height="3.9"/><rect x="300.75" y="110.09" width="3.9" height="3.9"/><rect x="300.75" y="121.40" width="3.9" height="3.9"/><rect x="300.75" y="132.71" width="3.9" height="3.9"/><rect x="300.75" y="144.02" width="3.9" height="3.9"/><rect x="300.75" y="155.33" width="3.9" height="3.9"/><rect x="300.75" y="166.64" width="3.9" height="3.9"/><rect x="300.75" y="177.95" width="3.9" height="3.9"/><rect x="300.75" y="189.26" width="3.9" height="3.9"/><rect x="300.75" y="200.57" width="3.9" height="3.9"/><rect x="300.75" y="211.88" width="3.9" height="3.9"/><rect x="300.75" y="223.19" width="3.9" height="3.9"/><rect x="300.75" y="234.50" width="3.9" height="3.9"/><rect x="300.75" y="245.81" width="3.9" height="3.9"/><rect x="300.75" y="257.12" width="3.9" height="3.9"/><rect x="300.75" y="268.43" width="3.9" height="3.9"/><rect x="300.75" y="279.74" width="3.9" height="3.9"/><rect x="300.75" y="291.05" width="3.9" height="3.9"/><rect x="300.75" y="302.36" width="3.9" height="3.9"/><rect x="300.75" y="313.67" width="3.9" height="3.9"/><rect x="312.10" y="64.85" width="3.9" height="3.9"/><rect x="312.10" y="76.16" width="3.9" height="3.9"/><rect x="312.10" y="87.47" width="3.9" height="3.9"/><rect x="312.10" y="98.78" width="3.9" height="3.9"/><rect x="312.10" y="110.09" width="3.9" height="3.9"/><rect x="312.10" y="121.40" width="3.9" height="3.9"/><rect x="312.10" y="132.71" width="3.9" height="3.9"/><rect x="312.10" y="144.02" width="3.9" height="3.9"/><rect x="312.10" y="155.33" width="3.9" height="3.9"/><rect x="312.10" y="166.64" width="3.9" height="3.9"/><rect x="312.10" y="177.95" width="3.9" height="3.9"/><rect x="312.10" y="189.26" width="3.9" height="3.9"/><rect x="312.10" y="200.57" width="3.9" height="3.9"/><rect x="312.10" y="211.88" width="3.9" height="3.9"/><rect x="312.10" y="223.19" width="3.9" height="3.9"/><rect x="312.10" y="234.50" width="3.9" height="3.9"/><rect x="312.10" y="245.81" width="3.9" height="3.9"/><rect x="312.10" y="257.12" width="3.9" height="3.9"/><rect x="312.10" y="268.43" width="3.9" height="3.9"/><rect x="312.10" y="279.74" width="3.9" height="3.9"/><rect x="312.10" y="291.05" width="3.9" height="3.9"/><rect x="312.10" y="302.36" width="3.9" height="3.9"/><rect x="312.10" y="313.67" width="3.9" height="3.9"/><rect x="323.45" y="64.85" width="3.9" height="3.9"/><rect x="323.45" y="76.16" width="3.9" height="3.9"/><rect x="323.45" y="87.47" width="3.9" height="3.9"/><rect x="323.45" y="98.78" width="3.9" height="3.9"/><rect x="323.45" y="110.09" width="3.9" height="3.9"/><rect x="323.45" y="121.40" width="3.9" height="3.9"/><rect x="323.45" y="132.71" width="3.9" height="3.9"/><rect x="323.45" y="144.02" width="3.9" height="3.9"/><rect x="323.45" y="155.33" width="3.9" height="3.9"/><rect x="323.45" y="166.64" width="3.9" height="3.9"/><rect x="323.45" y="177.95" width="3.9" height="3.9"/><rect x="323.45" y="189.26" width="3.9" height="3.9"/><rect x="323.45" y="200.57" width="3.9" height="3.9"/><rect x="323.45" y="211.88" width="3.9" height="3.9"/><rect x="323.45" y="223.19" width="3.9" height="3.9"/><rect x="323.45" y="234.50" width="3.9" height="3.9"/><rect x="323.45" y="245.81" width="3.9" height="3.9"/><rect x="323.45" y="257.12" width="3.9" height="3.9"/><rect x="323.45" y="268.43" width="3.9" height="3.9"/><rect x="323.45" y="279.74" width="3.9" height="3.9"/><rect x="323.45" y="291.05" width="3.9" height="3.9"/><rect x="323.45" y="302.36" width="3.9" height="3.9"/><rect x="323.45" y="313.67" width="3.9" height="3.9"/><rect x="334.80" y="64.85" width="3.9" height="3.9"/><rect x="334.80" y="76.16" width="3.9" height="3.9"/><rect x="334.80" y="87.47" width="3.9" height="3.9"/><rect x="334.80" y="98.78" width="3.9" height="3.9"/><rect x="334.80" y="110.09" width="3.9" height="3.9"/><rect x="334.80" y="121.40" width="3.9" height="3.9"/><rect x="334.80" y="132.71" width="3.9" height="3.9"/><rect x="334.80" y="144.02" width="3.9" height="3.9"/><rect x="334.80" y="155.33" width="3.9" height="3.9"/><rect x="334.80" y="166.64" width="3.9" height="3.9"/><rect x="334.80" y="177.95" width="3.9" height="3.9"/><rect x="334.80" y="189.26" width="3.9" height="3.9"/><rect x="334.80" y="200.57" width="3.9" height="3.9"/><rect x="334.80" y="211.88" width="3.9" height="3.9"/><rect x="334.80" y="223.19" width="3.9" height="3.9"/><rect x="334.80" y="234.50" width="3.9" height="3.9"/><rect x="334.80" y="245.81" width="3.9" height="3.9"/><rect x="334.80" y="257.12" width="3.9" height="3.9"/><rect x="334.80" y="268.43" width="3.9" height="3.9"/><rect x="334.80" y="279.74" width="3.9" height="3.9"/><rect x="334.80" y="291.05" width="3.9" height="3.9"/><rect x="334.80" y="302.36" width="3.9" height="3.9"/><rect x="334.80" y="313.67" width="3.9" height="3.9"/><rect x="346.15" y="64.85" width="3.9" height="3.9"/><rect x="346.15" y="76.16" width="3.9" height="3.9"/><rect x="346.15" y="87.47" width="3.9" height="3.9"/><rect x="346.15" y="98.78" width="3.9" height="3.9"/><rect x="346.15" y="110.09" width="3.9" height="3.9"/><rect x="346.15" y="121.40" width="3.9" height="3.9"/><rect x="346.15" y="132.71" width="3.9" height="3.9"/><rect x="346.15" y="144.02" width="3.9" height="3.9"/><rect x="346.15" y="155.33" width="3.9" height="3.9"/><rect x="346.15" y="166.64" width="3.9" height="3.9"/><rect x="346.15" y="177.95" width="3.9" height="3.9"/><rect x="346.15" y="189.26" width="3.9" height="3.9"/><rect x="346.15" y="200.57" width="3.9" height="3.9"/><rect x="346.15" y="211.88" width="3.9" height="3.9"/><rect x="346.15" y="223.19" width="3.9" height="3.9"/><rect x="346.15" y="234.50" width="3.9" height="3.9"/><rect x="346.15" y="245.81" width="3.9" height="3.9"/><rect x="346.15" y="257.12" width="3.9" height="3.9"/><rect x="346.15" y="268.43" width="3.9" height="3.9"/><rect x="346.15" y="279.74" width="3.9" height="3.9"/><rect x="346.15" y="291.05" width="3.9" height="3.9"/><rect x="346.15" y="302.36" width="3.9" height="3.9"/><rect x="346.15" y="313.67" width="3.9" height="3.9"/></g><path d="M347.6 65 V318 M350.6 65 V318" stroke="#a89848" stroke-width="0.7" opacity="0.55"/><rect x="96.5" y="65.4" width="252.7" height="253" fill="none" stroke="#b27a5a" stroke-width="0.9"/><circle cx="96.7" cy="65.3" r="4.3" fill="rgba(190,140,80,0.45)"/><circle cx="96.7" cy="65.3" r="2.7" fill="#b08868" opacity="0.9"/><circle cx="349.2" cy="65.3" r="4.3" fill="rgba(190,140,80,0.45)"/><circle cx="349.2" cy="65.3" r="2.7" fill="#b08868" opacity="0.9"/><circle cx="96.7" cy="318.5" r="4.3" fill="rgba(190,140,80,0.45)"/><circle cx="96.7" cy="318.5" r="2.7" fill="#b08868" opacity="0.9"/><circle cx="349.2" cy="318.5" r="4.3" fill="rgba(190,140,80,0.45)"/><circle cx="349.2" cy="318.5" r="2.7" fill="#b08868" opacity="0.9"/><rect x="92" y="313" width="10" height="10" fill="none" stroke="#8a8ad8" stroke-width="0.6" opacity="0.6"/><circle cx="223" cy="145.5" r="57" fill="none" stroke="#8a4a60" stroke-width="0.8"/><rect x="211.3" y="188.3" width="23.4" height="7.4" fill="#c6c6c6" stroke="#3aa83a" stroke-width="0.9"/><path d="M219.5 186 V205.5" stroke="#d84848" stroke-width="0.9"/><path d="M209 195.6 H211.5" stroke="#d84848" stroke-width="0.8"/><text x="214.6" y="194.6" font-size="6.3" fill="#1e8a1e" stroke="#1e8a1e" stroke-width="0.15" font-family="Liberation Sans" textLength="15.8" lengthAdjust="spacingAndGlyphs">-50,00</text><path d="M370 264.4 H389.4 M379.4 254.4 V274.4" stroke="#c84848" stroke-width="0.9"/><circle cx="395" cy="317.7" r="1.9" fill="#9090f0" stroke="#6a6ad8" stroke-width="0.5"/></svg>
<div class="a" style="left:307px;top:89.8px;width:174px;height:167.4px;background:#f0f0f0;border:1px solid #888;border-left-color:#555;border-bottom-color:#3aa8d8;border-right-color:#2a7a9a;box-shadow:0.5px 0.8px 0 #444"></div>
<div class="a" style="left:308px;top:90.8px;width:172px;height:12px;background:linear-gradient(#c4d6ea 0,#c4d6ea 6%,#8fb0d0 10%,#b7cfe8 100%)"></div>
<div class="t" style="left:311.00px;top:94.60px;font-size:6.8px;letter-spacing:0.12px;color:#1a2a4a;transform:scaleX(0.801);">New macroelement loads</div>
<div class="a" style="left:463.3px;top:93.3px;width:15px;height:8.2px;border:1px solid #9a5a4a;border-radius:2px;background:linear-gradient(#e8b0a0 0,#dc8a78 50%,#c85a40 51%,#d88068 100%)"></div>
<svg style="left:467.5px;top:94.3px" width="7" height="6" viewBox="0 0 7 6"><path d="M1.6 1 L5.4 5 M5.4 1 L1.6 5" stroke="#6a3a30" stroke-width="2" opacity="0.45"/><path d="M1.6 1 L5.4 5 M5.4 1 L1.6 5" stroke="#fff" stroke-width="1.1"/></svg>
<div class="a" style="left:311.7px;top:109px;width:3px;height:1px;background:#cfcfcf"></div>
<div class="a" style="left:337.5px;top:109px;width:139.1px;height:1px;background:#cfcfcf"></div>
<div class="t" style="left:315.80px;top:107.77px;font-size:6.27px;letter-spacing:0.12px;color:#222;transform:scaleX(0.815);">Location</div>
<div class="a" style="left:311.7px;top:132px;width:3px;height:1px;background:#cfcfcf"></div>
<div class="a" style="left:344px;top:132px;width:132.6px;height:1px;background:#cfcfcf"></div>
<div class="t" style="left:315.80px;top:130.37px;font-size:6.27px;letter-spacing:0.12px;color:#222;transform:scaleX(0.825);">Rorce load</div>
<div class="t" style="left:314.20px;top:119.16px;font-size:6.27px;letter-spacing:0.12px;color:#222;transform:scaleX(0.818);">Macroelement :</div>
<div class="t" style="left:314.20px;top:141.66px;font-size:6.27px;letter-spacing:0.12px;color:#222;transform:scaleX(0.849);">Type of load :</div>
<div class="t" style="left:314.20px;top:155.06px;font-size:6.27px;letter-spacing:0.12px;color:#222;transform:scaleX(0.833);">Magnitude :</div>
<div class="a" style="left:362.5px;top:116.5px;width:110.30000000000001px;height:9.900000000000006px;background:#fff;border:1px solid #c4c4c4;border-top-color:#8a8a8a;border-left-color:#8a8a8a"></div>
<div class="a" style="left:463.8px;top:117.5px;width:8px;height:7.900000000000006px;background:linear-gradient(#f4f4f4,#dcdcdc);border-left:1px solid #c8c8c8"></div>
<svg style="left:465.8px;top:119.7px" width="4" height="3" viewBox="0 0 4 3"><path d="M0 0 H4 L2 2.6 Z" fill="#111"/></svg>
<div class="t" style="left:364.00px;top:119.22px;font-size:6.27px;letter-spacing:0.12px;color:#111;transform:scaleX(0.750);">No.  1</div>
<div class="a" style="left:378.3px;top:139px;width:94.5px;height:10px;background:#fff;border:1px solid #c4c4c4;border-top-color:#8a8a8a;border-left-color:#8a8a8a"></div>
<div class="a" style="left:463.8px;top:140px;width:8px;height:8px;background:linear-gradient(#f4f4f4,#dcdcdc);border-left:1px solid #c8c8c8"></div>
<svg style="left:465.8px;top:142.2px" width="4" height="3" viewBox="0 0 4 3"><path d="M0 0 H4 L2 2.6 Z" fill="#111"/></svg>
<div class="t" style="left:380.00px;top:141.76px;font-size:6.27px;letter-spacing:0.12px;color:#111;transform:scaleX(0.832);">uniform</div>
<div class="t" style="left:400.40px;top:155.06px;font-size:6.27px;letter-spacing:0.12px;color:#222;transform:scaleX(1.056);">f =</div>
<div class="a" style="left:411px;top:152.6px;width:41px;height:9.6px;background:#fff;border:1px solid #8a8a8a;border-bottom-color:#dcdcdc;border-right-color:#dcdcdc"></div>
<div class="t" style="left:434.00px;top:155.06px;font-size:6.27px;letter-spacing:0.12px;color:#222;transform:scaleX(0.838);">-50,00</div>
<div class="t" style="left:455.6px;top:154.6px;font-size:6px;color:#222;transform:scaleX(0.92)">[kN/m<span style="font-size:4.5px;position:relative;top:-2px">2</span>]</div>
<div class="a" style="left:311.5px;top:237.2px;width:165.2px;height:1px;background:#c8c8c8;box-shadow:0 1px #fff"></div>
<div class="a" style="left:398.2px;top:240.8px;width:37.69999999999999px;height:11.399999999999977px;background:#4a4a4a"></div>
<div class="a" style="left:399.2px;top:241.8px;width:35.69999999999999px;height:9.399999999999977px;background:#f0f0f0;border:1px solid #fff;border-right-color:#7a7a7a;border-bottom-color:#7a7a7a"></div>
<svg style="left:408.2px;top:243.2px" width="6.3" height="6.3" viewBox="0 0 6.3 6.3"><rect x="0.5" y="0.5" width="5.3" height="5.3" fill="#d8f0d8" stroke="#1a9a1a" stroke-width="0.9"/><path d="M3.15 1.5 V4.8 M1.5 3.15 H4.8" stroke="#1a8a1a" stroke-width="1.2"/></svg>
<div class="t" style="left:417.20px;top:244.16px;font-size:6.27px;letter-spacing:0.12px;color:#111;transform:scaleX(0.834);">Add</div>
<div class="a" style="left:439px;top:240.8px;width:37.69999999999999px;height:11.399999999999977px;background:#f0f0f0;border:1px solid #fff;border-right-color:#5a5a5a;border-bottom-color:#5a5a5a;box-shadow:inset -1px -1px 0 #c8c8c8, inset 1px 1px 0 #f4f4f4"></div>
<svg style="left:445.4px;top:243.2px" width="6.8" height="6.8" viewBox="0 0 6.8 6.8"><rect x="0.5" y="0.5" width="5.8" height="5.8" rx="1" fill="#fbe8e8" stroke="#c03030" stroke-width="0.9"/><circle cx="3.4" cy="3.4" r="1.5" fill="none" stroke="#b02020" stroke-width="0.9"/></svg>
<div class="t" style="left:454.60px;top:244.16px;font-size:6.27px;letter-spacing:0.12px;color:#111;transform:scaleX(0.815);">Cancel</div>
<div class="a" style="left:509px;top:42px;width:87px;height:11px;background:#f0f0f0;border:1px solid #dadada;border-right-color:#c8c8c8"></div>
<div class="a" style="left:509px;top:52px;width:87px;height:1px;background:#6a6a6a"></div>
<div class="t" style="left:511.00px;top:45.07px;font-size:6.27px;letter-spacing:0.12px;color:#22356a;transform:scaleX(0.907);">Modes</div>
<div class="a" style="left:588px;top:48px;width:4px;height:1.6px;background:#555;border-radius:1px"></div>
<div class="a" style="left:509px;top:53px;width:1px;height:324px;background:#7a7a7a"></div>
<div class="a" style="left:510px;top:53px;width:1px;height:324px;background:#fff"></div>
<div class="a" style="left:512px;top:77px;width:81.5px;height:1px;background:#cfcfcf"></div>
<div class="a" style="left:512px;top:165px;width:81.5px;height:1px;background:#cfcfcf"></div>
<div class="a" style="left:512px;top:211px;width:81.5px;height:1px;background:#cfcfcf"></div>
<div class="a" style="left:512px;top:309px;width:81.5px;height:1px;background:#cfcfcf"></div>
<div class="a" style="left:512px;top:334px;width:81.5px;height:1px;background:#cfcfcf"></div>
<div class="a" style="left:511px;top:245.3px;width:82.5px;height:10.6px;background:#f4f4f4;border:1px solid #fff;border-right-color:#e2e2e2;border-bottom-color:#e2e2e2"></div>
<div class="t" style="left:524.00px;top:57.47px;font-size:6.27px;letter-spacing:0.12px;color:#22243a;transform:scaleX(0.820);">Project</div>
<svg style="left:514px;top:55.9px" width="9" height="8.5" viewBox="0 0 9 8.5"><path d="M0.5 0.8 H2.5 M3.5 0.8 H6.5 M0.5 3.2 H6.5 M0.5 5.8 H2.5 M3.5 5.8 H6.5" stroke="#555" stroke-width="1"/><path d="M0.5 2 H6.5 M0.5 4.5 H6.5" stroke="#999" stroke-width="0.6"/></svg>
<div class="t" style="left:524.00px;top:68.16px;font-size:6.27px;letter-spacing:0.12px;color:#22243a;transform:scaleX(0.807);">Analysis methods</div>
<svg style="left:514px;top:66.6px" width="9" height="8.5" viewBox="0 0 9 8.5"><rect x="0.5" y="0.5" width="5" height="6.5" fill="#ddd" stroke="#333" stroke-width="0.9"/><path d="M0.5 2.5 H5.5" stroke="#333" stroke-width="0.8"/><path d="M6.5 0.5 Q8 1 7 2.5 V3.5" fill="none" stroke="#222" stroke-width="0.8"/></svg>
<div class="t" style="left:524.00px;top:82.56px;font-size:6.27px;letter-spacing:0.12px;color:#22243a;transform:scaleX(0.801);">Joints</div>
<svg style="left:514px;top:81px" width="9" height="8.5" viewBox="0 0 9 8.5"><circle cx="2" cy="5" r="1.6" fill="#fff" stroke="#333" stroke-width="0.8"/><path d="M3.5 5 H8 M2.5 3.8 L6 0.5" stroke="#333" stroke-width="0.8"/></svg>
<div class="t" style="left:524.00px;top:93.16px;font-size:6.27px;letter-spacing:0.12px;color:#22243a;transform:scaleX(0.763);">Lines</div>
<svg style="left:514px;top:91.6px" width="9" height="8.5" viewBox="0 0 9 8.5"><path d="M1 4.5 H8" stroke="#222" stroke-width="1.4"/><circle cx="1" cy="4.5" r="1" fill="#fff" stroke="#222" stroke-width="0.7"/></svg>
<div class="t" style="left:524.00px;top:103.66px;font-size:6.27px;letter-spacing:0.12px;color:#22243a;transform:scaleX(0.808);">Macroelements</div>
<svg style="left:514px;top:102.1px" width="9" height="8.5" viewBox="0 0 9 8.5"><path d="M0.5 7 V2 H3.5 V0.5 H7 V5.5 H3.5 V7 Z" fill="#f4f4f4" stroke="#333" stroke-width="0.9"/></svg>
<div class="t" style="left:524.00px;top:114.16px;font-size:6.27px;letter-spacing:0.12px;color:#22243a;transform:scaleX(0.798);">Openings</div>
<svg style="left:514px;top:112.6px" width="9" height="8.5" viewBox="0 0 9 8.5"><rect x="0.5" y="2" width="6" height="5" fill="#eee" stroke="#333" stroke-width="0.9"/><rect x="2" y="0.5" width="5.5" height="4" fill="none" stroke="#333" stroke-width="0.9"/></svg>
<div class="t" style="left:524.00px;top:124.47px;font-size:6.27px;letter-spacing:0.12px;color:#22243a;transform:scaleX(0.828);">Joint refinements</div>
<svg style="left:514px;top:122.9px" width="9" height="8.5" viewBox="0 0 9 8.5"><circle cx="4" cy="3.8" r="3.3" fill="none" stroke="#444" stroke-width="0.8"/><circle cx="4" cy="3.8" r="1.6" fill="none" stroke="#444" stroke-width="0.8"/></svg>
<div class="t" style="left:524.00px;top:134.87px;font-size:6.27px;letter-spacing:0.12px;color:#22243a;transform:scaleX(0.810);">Line refinements</div>
<svg style="left:514px;top:133.3px" width="9" height="8.5" viewBox="0 0 9 8.5"><path d="M0.5 4 H7.5" stroke="#222" stroke-width="1.8"/></svg>
<div class="t" style="left:524.00px;top:145.37px;font-size:6.27px;letter-spacing:0.12px;color:#22243a;transform:scaleX(0.816);">Macroelement refinements</div>
<svg style="left:514px;top:143.8px" width="9" height="8.5" viewBox="0 0 9 8.5"><rect x="0.5" y="1.5" width="5" height="5.5" fill="#eee" stroke="#333" stroke-width="0.9"/><rect x="3" y="0.3" width="4.5" height="4" fill="none" stroke="#333" stroke-width="0.8"/><path d="M1.5 3.5 H4" stroke="#555" stroke-width="0.6"/></svg>
<div class="t" style="left:524.00px;top:155.87px;font-size:6.27px;letter-spacing:0.12px;color:#22243a;transform:scaleX(0.821);">Mesh generation</div>
<svg style="left:514px;top:154.3px" width="9" height="8.5" viewBox="0 0 9 8.5"><rect x="0.5" y="0.5" width="7" height="7" fill="none" stroke="#555" stroke-width="0.7"/><path d="M0.5 4 L4 0.5 L7.5 4 L4 7.5 Z M2 2 L6 6 M6 2 L2 6" fill="none" stroke="#333" stroke-width="0.7"/></svg>
<div class="t" style="left:524.00px;top:170.47px;font-size:6.27px;letter-spacing:0.12px;color:#22243a;transform:scaleX(0.828);">Joint supports</div>
<svg style="left:514px;top:168.9px" width="9" height="8.5" viewBox="0 0 9 8.5"><path d="M0.5 1 L4 4.5 H8" stroke="#222" stroke-width="0.9"/><circle cx="3" cy="5" r="1.3" fill="#222"/></svg>
<div class="t" style="left:524.00px;top:180.87px;font-size:6.27px;letter-spacing:0.12px;color:#22243a;transform:scaleX(0.816);">Line supports</div>
<svg style="left:514px;top:179.3px" width="9" height="8.5" viewBox="0 0 9 8.5"><path d="M0.5 3 H7.5" stroke="#222" stroke-width="1"/><path d="M1 6 L2 3 L3 6 Z M5 6 L6 3 L7 6 Z" fill="#333"/></svg>
<div class="t" style="left:524.00px;top:191.37px;font-size:6.27px;letter-spacing:0.12px;color:#22243a;transform:scaleX(0.750);">Beams</div>
<svg style="left:514px;top:189.8px" width="9" height="8.5" viewBox="0 0 9 8.5"><path d="M0.5 3 H8 M1.5 5 Q4.2 7.5 7 5" fill="none" stroke="#222" stroke-width="1.1"/></svg>
<div class="t" style="left:524.00px;top:201.87px;font-size:6.27px;letter-spacing:0.12px;color:#22243a;transform:scaleX(0.797);">Macroelement subsoils</div>
<svg style="left:514px;top:200.3px" width="9" height="8.5" viewBox="0 0 9 8.5"><rect x="0.5" y="0.5" width="4" height="4" fill="#ddd" stroke="#333" stroke-width="0.8"/><path d="M5 1.5 H7.5 M5 3.5 H7.5 M0.5 6 H7.5 M0.5 7.5 H7.5" stroke="#333" stroke-width="0.8"/></svg>
<div class="t" style="left:524.00px;top:216.47px;font-size:6.27px;letter-spacing:0.12px;color:#22243a;transform:scaleX(0.784);">Load cases</div>
<svg style="left:514px;top:214.9px" width="9" height="8.5" viewBox="0 0 9 8.5"><rect x="1.5" y="1.5" width="6" height="6" fill="#888" stroke="#222" stroke-width="0.8"/><path d="M2 3.5 H7 M2 5.5 H7" stroke="#eee" stroke-width="0.8"/><path d="M0.5 0 V3" stroke="#222" stroke-width="0.8"/></svg>
<div class="t" style="left:524.00px;top:226.87px;font-size:6.27px;letter-spacing:0.12px;color:#22243a;transform:scaleX(0.796);">Joint loads</div>
<svg style="left:514px;top:225.3px" width="9" height="8.5" viewBox="0 0 9 8.5"><path d="M2 0.5 V4 M0.8 2.8 L2 4 L3.2 2.8 M1 5 H8 M1 7 H8" fill="none" stroke="#333" stroke-width="0.8"/></svg>
<div class="t" style="left:524.00px;top:237.56px;font-size:6.27px;letter-spacing:0.12px;color:#22243a;transform:scaleX(0.775);">Line loads</div>
<svg style="left:514px;top:236px" width="9" height="8.5" viewBox="0 0 9 8.5"><rect x="0.5" y="4" width="7.5" height="3" fill="#eee" stroke="#333" stroke-width="0.8"/><path d="M1.5 0.5 V3.5 M3.5 0.5 V3.5 M5.5 0.5 V3.5 M1 1 H6.5" stroke="#333" stroke-width="0.8"/></svg>
<div class="t" style="left:524.00px;top:248.37px;font-size:6.27px;letter-spacing:0.12px;color:#22243a;transform:scaleX(0.815);">Macroelement loads</div>
<svg style="left:514px;top:246.8px" width="9" height="8.5" viewBox="0 0 9 8.5"><rect x="0.5" y="0.5" width="5" height="2.2" fill="#cc2020"/><rect x="0.5" y="2.7" width="5" height="2" fill="#222"/><rect x="0.5" y="4.7" width="5" height="2.2" fill="#f0d000"/><path d="M5.5 5.8 H8" stroke="#222" stroke-width="1"/></svg>
<div class="t" style="left:524.00px;top:258.76px;font-size:6.27px;letter-spacing:0.12px;color:#22243a;transform:scaleX(0.814);">Solitary point loads</div>
<svg style="left:514px;top:257.2px" width="9" height="8.5" viewBox="0 0 9 8.5"><rect x="0.5" y="1" width="7" height="6.5" fill="#fafafa" stroke="#333" stroke-width="0.8"/><path d="M2.5 2.5 L4.5 4.5 L2.5 4.5 Z" fill="none" stroke="#333" stroke-width="0.7"/></svg>
<div class="t" style="left:524.00px;top:269.17px;font-size:6.27px;letter-spacing:0.12px;color:#22243a;transform:scaleX(0.801);">Solitary line loads</div>
<svg style="left:514px;top:267.6px" width="9" height="8.5" viewBox="0 0 9 8.5"><rect x="0.5" y="1" width="7" height="6.5" fill="#fafafa" stroke="#333" stroke-width="0.8"/><path d="M2 6 L6 2" stroke="#333" stroke-width="1.3"/></svg>
<div class="t" style="left:524.00px;top:279.56px;font-size:6.27px;letter-spacing:0.12px;color:#22243a;transform:scaleX(0.815);">Solitary area loads</div>
<svg style="left:514px;top:278px" width="9" height="8.5" viewBox="0 0 9 8.5"><rect x="0.5" y="1" width="7" height="6.5" fill="#fafafa" stroke="#333" stroke-width="0.8"/><rect x="2" y="2.5" width="3.5" height="3" fill="#777"/></svg>
<div class="t" style="left:524.00px;top:290.06px;font-size:6.27px;letter-spacing:0.12px;color:#22243a;transform:scaleX(0.779);">Combination ULS</div>
<svg style="left:514px;top:288.5px" width="9" height="8.5" viewBox="0 0 9 8.5"><path d="M0.5 7 V2 L2 0.5 L3.5 2 V7 M4.5 7 V2 L6 0.5 L7.5 2 V7 M0.5 4.5 H7.5" fill="none" stroke="#333" stroke-width="0.9"/></svg>
<div class="t" style="left:524.00px;top:300.46px;font-size:6.27px;letter-spacing:0.12px;color:#22243a;transform:scaleX(0.781);">Combination SLS</div>
<svg style="left:514px;top:298.9px" width="9" height="8.5" viewBox="0 0 9 8.5"><path d="M0.5 7.5 V3 H3.5 V7.5 M4.5 7.5 V3 H7.5 V7.5 M0.5 5 H7.5 M2 0.5 V3 M6 0.5 V3" fill="none" stroke="#333" stroke-width="0.9"/></svg>
<div class="t" style="left:524.00px;top:314.87px;font-size:6.27px;letter-spacing:0.12px;color:#22243a;transform:scaleX(0.810);">Dimensioning parameters</div>
<svg style="left:514px;top:313.3px" width="9" height="8.5" viewBox="0 0 9 8.5"><path d="M0.5 1.5 H7.5 M0.5 4 H7.5 M0.5 6.5 H7.5 M1.5 0.5 V7.5 M4 0.5 V7.5 M6.5 0.5 V7.5" stroke="#333" stroke-width="1.3"/></svg>
<div class="t" style="left:524.00px;top:325.46px;font-size:6.27px;letter-spacing:0.12px;color:#22243a;transform:scaleX(0.804);">Macroelement dimensionings</div>
<svg style="left:514px;top:323.9px" width="9" height="8.5" viewBox="0 0 9 8.5"><rect x="0.5" y="1.5" width="6" height="6" fill="#fff" stroke="#333" stroke-width="0.8"/><path d="M2 4.5 H5.5 M3.5 3 L2 4.5 L3.5 6 M2 0.5 H7.5 V6" fill="none" stroke="#222" stroke-width="0.8"/></svg>
<div class="t" style="left:524.00px;top:340.06px;font-size:6.27px;letter-spacing:0.12px;color:#22243a;transform:scaleX(0.786);">Analysis</div>
<svg style="left:514px;top:338.5px" width="9" height="8.5" viewBox="0 0 9 8.5"><rect x="0.5" y="0.5" width="7" height="7" fill="#eee" stroke="#333" stroke-width="0.9"/><path d="M0.5 3 H7.5 M0.5 5.2 H7.5 M3 0.5 V7.5" stroke="#444" stroke-width="0.8"/></svg>
<div class="t" style="left:524.00px;top:350.56px;font-size:6.27px;letter-spacing:0.12px;color:#22243a;transform:scaleX(0.777);">Values</div>
<svg style="left:514px;top:349px" width="9" height="8.5" viewBox="0 0 9 8.5"><path d="M0.5 1.5 L3 0.5 M1 3 L3.5 5.5 M4.5 7.5 L6 3 L7.5 7.5 M5 6 H7" fill="none" stroke="#222" stroke-width="0.9"/></svg>
<div class="t" style="left:524.00px;top:360.96px;font-size:6.27px;letter-spacing:0.12px;color:#22243a;transform:scaleX(0.807);">Distributions</div>
<svg style="left:514px;top:359.4px" width="9" height="8.5" viewBox="0 0 9 8.5"><path d="M0.5 7.5 H8 M0.5 4.5 V7.5 M0.5 5 Q3 5 4 1 L5 4 Q6 5 8 5 V7.5" fill="none" stroke="#222" stroke-width="0.8"/><path d="M3.5 0 V2" stroke="#222" stroke-width="0.8"/></svg>
<div class="a" style="left:509px;top:377px;width:87px;height:9px;background:#f0f0f0;border-top:1px solid #dadada"></div>
<div class="a" style="left:509px;top:385.5px;width:87px;height:1px;background:#6a6a6a"></div>
<div class="t" style="left:511.00px;top:379.17px;font-size:6.27px;letter-spacing:0.12px;color:#1c2450;transform:scaleX(0.809);">Pictures</div>
<div class="a" style="left:588px;top:382.3px;width:4px;height:1.6px;background:#555;border-radius:1px"></div>
<div class="a" style="left:509px;top:386px;width:1px;height:46px;background:#7a7a7a"></div>
<div class="a" style="left:510px;top:386px;width:1px;height:46px;background:#fff"></div>
<div class="a" style="left:512px;top:389px;width:81.6px;height:10.4px;background:#c0dcc0;border:1px solid #a8b8a8;border-bottom-color:#777;border-right-color:#777"></div>
<div class="t" style="left:539.00px;top:391.76px;font-size:6.27px;letter-spacing:0.12px;color:#111;transform:scaleX(0.820);">Add picture</div>
<div class="t" style="left:511.00px;top:403.56px;font-size:6.27px;letter-spacing:0.12px;color:#111;transform:scaleX(0.820);">Macroelement loads :</div>
<div class="t" style="left:589.80px;top:403.56px;font-size:6.27px;letter-spacing:0.12px;color:#111;transform:scaleX(0.803);">0</div>
<div class="t" style="left:511.00px;top:411.17px;font-size:6.27px;letter-spacing:0.12px;color:#111;transform:scaleX(0.860);">Total :</div>
<div class="t" style="left:589.80px;top:411.17px;font-size:6.27px;letter-spacing:0.12px;color:#111;transform:scaleX(0.803);">0</div>
<div class="a" style="left:512px;top:419.6px;width:81.6px;height:10.8px;background:linear-gradient(#f8f8f8,#e8e8e8);border:1px solid #c8c8c8;border-bottom-color:#707070;border-right-color:#707070"></div>
<div class="t" style="left:535.00px;top:422.56px;font-size:6.27px;letter-spacing:0.12px;color:#111;transform:scaleX(0.829);">List of pictures</div>
<div class="a" style="left:4px;top:333px;width:501px;height:4px;background:#f0f0f0"></div>
<div class="a" style="left:4px;top:337px;width:10.5px;height:95.5px;background:#f0f0f0;border:1px solid #d4d4d4;border-right-color:#a0a0a0;border-bottom-color:#a0a0a0"></div>
<div class="a" style="left:10px;top:341px;width:2px;height:2.5px;background:#444"></div>
<div class="t" style="left:-17.71px;top:404.20px;font-size:6px;color:#1c2450;transform:rotate(-90deg) scaleX(0.870);transform-origin:center">Macroelement loads</div>
<div class="a" style="left:14.5px;top:337px;width:490.5px;height:14px;background:#f0f0f0;border:1px solid #c4c4c4;border-right-color:#a8a8a8;border-bottom-color:#c8c8c8"></div>
<div class="t" style="left:19.00px;top:341.96px;font-size:6.27px;font-weight:bold;letter-spacing:0.12px;color:#111;transform:scaleX(0.847);">Active load case :</div>
<div class="a" style="left:69.5px;top:338.5px;width:108px;height:11.5px;background:#f8f8f8;border:1px solid #e4e4e4"></div>
<div class="t" style="left:72.00px;top:341.96px;font-size:6.27px;letter-spacing:0.12px;color:#111;transform:scaleX(0.840);">Q2 force-variable</div>
<svg style="left:168px;top:342.8px" width="4" height="3" viewBox="0 0 4 3"><path d="M0 0 H4 L2 2.6 Z" fill="#111"/></svg>
<div class="a" style="left:177px;top:339px;width:1px;height:10px;background:#d0d0d0;box-shadow:1px 0 #fff"></div>
<div class="t" style="left:182.00px;top:341.96px;font-size:6.27px;font-weight:bold;letter-spacing:0.12px;color:#111;transform:scaleX(0.904);">Macroelement loads :</div>
<svg style="left:248.8px;top:341.2px" width="6.5" height="6.5" viewBox="0 0 6.5 6.5"><rect x="0.5" y="0.5" width="5.5" height="5.5" fill="#fff" stroke="#222" stroke-width="0.9"/><rect x="1.8" y="1.8" width="3" height="3" fill="#111"/></svg>
<div class="t" style="left:258.00px;top:342.17px;font-size:6.27px;letter-spacing:0.12px;color:#222;transform:scaleX(0.790);">Add</div>
<svg style="left:293.8px;top:341.2px" width="6.5" height="6.5" viewBox="0 0 6.5 6.5"><rect x="0.5" y="0.5" width="5.5" height="5.5" fill="#fff" stroke="#222" stroke-width="0.9"/><path d="M3.25 1.5 V5 M1.5 3.25 H5" stroke="#111" stroke-width="1"/></svg>
<div class="t" style="left:302.50px;top:342.17px;font-size:6.27px;letter-spacing:0.12px;color:#222;transform:scaleX(0.855);">Modify</div>
<svg style="left:338.8px;top:341.2px" width="6.5" height="6.5" viewBox="0 0 6.5 6.5"><rect x="0.5" y="0.5" width="5.5" height="5.5" fill="#fff" stroke="#222" stroke-width="0.9"/><path d="M1.5 3.25 H5" stroke="#111" stroke-width="1.2"/></svg>
<div class="t" style="left:348.00px;top:342.17px;font-size:6.27px;letter-spacing:0.12px;color:#222;transform:scaleX(0.793);">Remove</div>
<svg style="left:384.5px;top:341.2px" width="6.5" height="6.5" viewBox="0 0 6.5 6.5"><rect x="0.5" y="0.5" width="5.5" height="5.5" fill="#fff" stroke="#222" stroke-width="0.9"/><path d="M2 1.5 L4.8 3.5 L2 5 Z" fill="#111"/></svg>
<div class="t" style="left:392.50px;top:342.17px;font-size:6.27px;letter-spacing:0.12px;color:#222;transform:scaleX(0.832);">Select</div>
<div class="a" style="left:14.5px;top:351.5px;width:447px;height:81px;background:#f0f0f0"></div>
<div class="a" style="left:18px;top:354px;width:443px;height:74.5px;background:#fff;border:1px solid #9a9a9a;border-right-color:#e4e4e4;border-bottom-color:#e4e4e4"></div>
<div class="a" style="left:19px;top:355px;width:432.5px;height:17.5px;background:#f0f0f0"></div>
<div class="a" style="left:19px;top:381px;width:25.5px;height:47px;background:#ececec"></div>
<div class="a" style="left:18px;top:354px;width:434px;height:1px;background:#555"></div>
<div class="a" style="left:19px;top:355px;width:8.5px;height:8.5px;background:#f0f0f0;border:1px solid #fff;border-right-color:#a0a0a0;border-bottom-color:#a0a0a0"></div>
<div class="a" style="left:27.5px;top:355px;width:8.5px;height:8.5px;background:#f0f0f0;border:1px solid #fff;border-right-color:#a0a0a0;border-bottom-color:#a0a0a0"></div>
<div class="a" style="left:36px;top:355px;width:8.5px;height:8.5px;background:#f0f0f0;border:1px solid #fff;border-right-color:#a0a0a0;border-bottom-color:#a0a0a0"></div>
<div class="a" style="left:19px;top:363.5px;width:25.5px;height:9px;border-bottom:1px solid #c0c0c0"></div>
<svg style="left:20.5px;top:356.5px" width="6" height="6" viewBox="0 0 6 6"><rect x="0.5" y="0.5" width="4" height="4" fill="#111"/><path d="M3.5 3.5 L5.5 5.5" stroke="#111" stroke-width="1"/></svg>
<svg style="left:29px;top:356.5px" width="6" height="6" viewBox="0 0 6 6"><rect x="0.5" y="1.5" width="4.5" height="3.5" fill="#ddd" stroke="#444" stroke-width="0.8"/></svg>
<svg style="left:37.5px;top:356.5px" width="6" height="6" viewBox="0 0 6 6"><rect x="0.5" y="0.5" width="3" height="3" fill="#555"/><rect x="1.5" y="1.5" width="4" height="4" fill="#111"/></svg>
<div class="a" style="left:44px;top:354px;width:1px;height:27px;background:#333"></div>
<div class="a" style="left:106px;top:354px;width:1px;height:27px;background:#7a7a7a"></div>
<div class="a" style="left:168px;top:363px;width:1px;height:18px;background:#d0d0d0"></div>
<div class="a" style="left:199px;top:363px;width:1px;height:18px;background:#d0d0d0"></div>
<div class="a" style="left:231px;top:363px;width:1px;height:18px;background:#d0d0d0"></div>
<div class="a" style="left:262px;top:363px;width:1px;height:18px;background:#d0d0d0"></div>
<div class="a" style="left:294px;top:363px;width:1px;height:18px;background:#d0d0d0"></div>
<div class="a" style="left:325px;top:363px;width:1px;height:18px;background:#d0d0d0"></div>
<div class="a" style="left:357px;top:363px;width:1px;height:18px;background:#d0d0d0"></div>
<div class="a" style="left:388px;top:363px;width:1px;height:18px;background:#d0d0d0"></div>
<div class="a" style="left:420px;top:363px;width:1px;height:18px;background:#d0d0d0"></div>
<div class="a" style="left:45px;top:372.3px;width:407px;height:1px;background:#555"></div>
<div class="a" style="left:18px;top:372.3px;width:27px;height:1px;background:#2a2a50"></div>
<div class="a" style="left:18px;top:380.8px;width:434px;height:1.2px;background:#333"></div>
<div class="a" style="left:18px;top:372.3px;width:1px;height:9.5px;background:#2a2a50"></div>
<div class="a" style="left:451px;top:354px;width:1.2px;height:27.5px;background:#555"></div>
<div class="a" style="left:452px;top:354.5px;width:9px;height:74px;background:#e9e9e9;border-right:1px solid #dcdcdc"></div>
<div class="t" style="left:65.00px;top:356.96px;font-size:6.27px;letter-spacing:0.12px;color:#1c2450;transform:scaleX(0.815);">Location</div>
<div class="t" style="left:266.30px;top:357.06px;font-size:6.27px;letter-spacing:0.12px;color:#1c2450;transform:scaleX(0.818);">Rorce load</div>
<div class="t" style="left:21.60px;top:365.96px;font-size:6.27px;letter-spacing:0.12px;color:#1c2450;transform:scaleX(0.847);">Number</div>
<div class="t" style="left:122.00px;top:366.26px;font-size:6.27px;letter-spacing:0.12px;color:#1c2450;transform:scaleX(0.846);">Type of load</div>
<div class="t" style="left:208.80px;top:366.26px;font-size:6.27px;letter-spacing:0.12px;color:#1c2450;transform:scaleX(0.868);">x [m]</div>
<div class="t" style="left:240.00px;top:366.26px;font-size:6.27px;letter-spacing:0.12px;color:#1c2450;transform:scaleX(0.889);">y [m]</div>
<div class="t" style="left:303.00px;top:366.26px;font-size:6.27px;letter-spacing:0.12px;color:#1c2450;transform:scaleX(0.853);">x [m]</div>
<div class="t" style="left:333.80px;top:366.26px;font-size:6.27px;letter-spacing:0.12px;color:#1c2450;transform:scaleX(0.974);">y [m]</div>
<div class="t" style="left:397.50px;top:366.26px;font-size:6.27px;letter-spacing:0.12px;color:#1c2450;transform:scaleX(0.889);">x [m]</div>
<div class="t" style="left:429.50px;top:366.26px;font-size:6.27px;letter-spacing:0.12px;color:#1c2450;transform:scaleX(0.839);">y [m]</div>
<div class="t" style="left:170px;top:366px;font-size:6px;color:#1c2450;transform:scaleX(0.98)">f/&#947;<span style="font-size:4.5px;position:relative;top:1.2px">1</span> [kN/m<span style="font-size:4.5px;position:relative;top:-2px">2</span>]</div>
<div class="t" style="left:263.8px;top:366px;font-size:6px;color:#1c2450;transform:scaleX(1.07)">f<span style="font-size:4.5px;position:relative;top:1.2px">2</span> [kN/m<span style="font-size:4.5px;position:relative;top:-2px">2</span>]</div>
<div class="t" style="left:360px;top:366px;font-size:6px;color:#1c2450;transform:scaleX(1.0)">f<span style="font-size:4.5px;position:relative;top:1.2px">3</span> [kN/m<span style="font-size:4.5px;position:relative;top:-2px">2</span>]</div>
<svg style="left:25px;top:374.5px" width="4" height="5" viewBox="0 0 4 5"><path d="M0.5 0.5 L3.5 2.5 L0.5 4.5 Z" fill="#111"/></svg>
<div class="t" style="left:36.50px;top:374.76px;font-size:6.27px;letter-spacing:0.12px;color:#111;transform:scaleX(0.717);">1</div>
<div class="a" style="left:36px;top:380px;width:4px;height:0.6px;background:#555"></div>
<div class="t" style="left:46.40px;top:374.56px;font-size:6.27px;font-weight:bold;letter-spacing:0.12px;color:#111;transform:scaleX(0.901);">Macroelement No. 1</div>
<div class="t" style="left:108.00px;top:374.56px;font-size:6.27px;font-weight:bold;letter-spacing:0.12px;color:#111;transform:scaleX(0.915);">uniform</div>
<div class="t" style="left:181.30px;top:374.56px;font-size:6.27px;font-weight:bold;letter-spacing:0.12px;color:#111;transform:scaleX(0.925);">-50,00</div>
<svg style="left:454.3px;top:375px" width="4" height="3" viewBox="0 0 4 3"><path d="M0 2.5 H4 L2 0 Z" fill="#a0a0a0"/></svg>
<svg style="left:454.3px;top:422.5px" width="4" height="3" viewBox="0 0 4 3"><path d="M0 0 H4 L2 2.5 Z" fill="#a0a0a0"/></svg>
<div class="t" style="left:468.60px;top:355.56px;font-size:6.27px;font-weight:bold;letter-spacing:0.12px;color:#111;transform:scaleX(0.875);">Mac. load :</div>
<div class="a" style="left:464.4px;top:365.5px;width:36.60000000000002px;height:10.5px;background:#4a4a4a"></div>
<div class="a" style="left:465.4px;top:366.5px;width:34.60000000000002px;height:8.5px;background:#f0f0f0;border:1px solid #fff;border-right-color:#7a7a7a;border-bottom-color:#7a7a7a"></div>
<svg style="left:469px;top:367.6px" width="6.3" height="6.3" viewBox="0 0 6.3 6.3"><rect x="0.5" y="0.5" width="5.3" height="5.3" fill="#c8ecc8" stroke="#1a9a1a" stroke-width="0.9"/><rect x="1.9" y="1.9" width="2.5" height="2.5" fill="#1a8a1a"/></svg>
<div class="t" style="left:476.80px;top:368.56px;font-size:6.27px;letter-spacing:0.12px;color:#111;transform:scaleX(0.807);">Add</div>
<div class="a" style="left:464.4px;top:380px;width:36.60000000000002px;height:11px;background:#f0f0f0;border:1px solid #fff;border-right-color:#5a5a5a;border-bottom-color:#5a5a5a;box-shadow:inset -1px -1px 0 #c8c8c8, inset 1px 1px 0 #f4f4f4"></div>
<svg style="left:469px;top:382.3px" width="6.5" height="6.3" viewBox="0 0 6.5 6.3"><rect x="0.5" y="0.5" width="5.5" height="5.3" fill="#e4e4ff" stroke="#3a3ad0" stroke-width="0.9"/><path d="M1.6 2.2 H4.9 L3.25 4.2 Z" fill="#2a2ab0"/></svg>
<div class="t" style="left:476.80px;top:383.06px;font-size:6.27px;letter-spacing:0.12px;color:#111;transform:scaleX(0.850);">Modify</div>
<div class="a" style="left:464.4px;top:394.8px;width:36.60000000000002px;height:11.0px;background:#f0f0f0;border:1px solid #fff;border-right-color:#5a5a5a;border-bottom-color:#5a5a5a;box-shadow:inset -1px -1px 0 #c8c8c8, inset 1px 1px 0 #f4f4f4"></div>
<svg style="left:469px;top:397.1px" width="6.5" height="6.3" viewBox="0 0 6.5 6.3"><rect x="0.5" y="0.5" width="5.5" height="5.3" fill="#fbe4e4" stroke="#a83030" stroke-width="0.9"/><path d="M1.6 3.2 H4.9" stroke="#a02020" stroke-width="1.3"/></svg>
<div class="t" style="left:476.80px;top:397.87px;font-size:6.27px;letter-spacing:0.12px;color:#111;transform:scaleX(0.739);">Remove</div>
<div class="a" style="left:4px;top:433px;width:592px;height:13px;background:#f0f0f0;border-top:1px solid #fff"></div>
<div class="a" style="left:4px;top:434px;width:80.5px;height:11.5px;border:1px solid #c8c8c8;border-right-color:#fff;border-bottom-color:#fff"></div>
<div class="a" style="left:86px;top:434px;width:510px;height:11.5px;border:1px solid #c8c8c8;border-right-color:#fff;border-bottom-color:#fff"></div>
<div class="t" style="left:48.00px;top:437.56px;font-size:6.27px;letter-spacing:0.12px;color:#111;transform:scaleX(0.877);">3,57; 0,62 [m]</div>
<svg style="left:589px;top:439px" width="7" height="7" viewBox="0 0 7 7"><path d="M6.5 1 L1 6.5 M6.5 3.5 L3.5 6.5 M6.5 6 L6 6.5" stroke="#999" stroke-width="0.8"/></svg>
</body></html>
